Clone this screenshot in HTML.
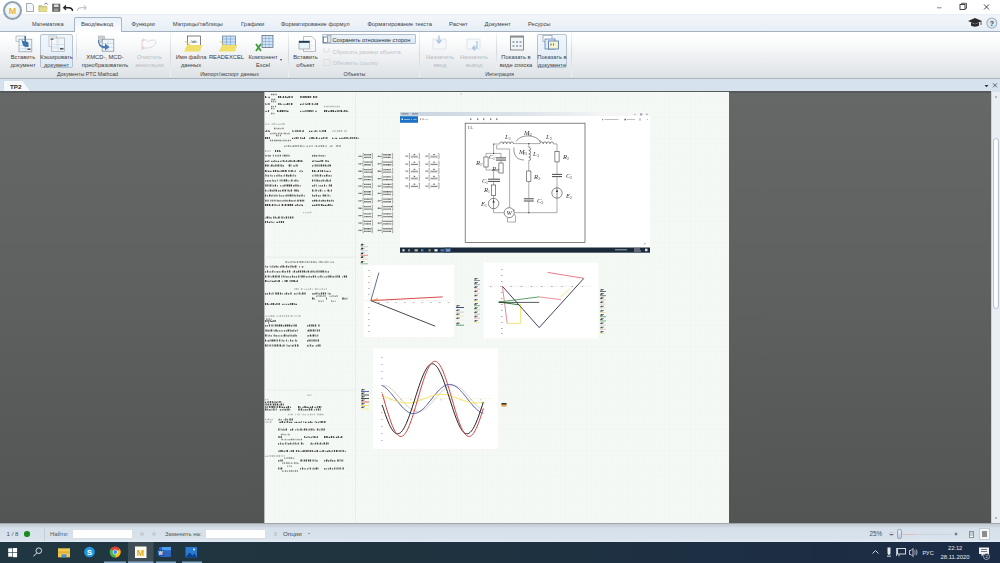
<!DOCTYPE html>
<html><head><meta charset="utf-8">
<style>
*{margin:0;padding:0;box-sizing:border-box}
html,body{width:1000px;height:563px;overflow:hidden;background:#fff;font-family:"Liberation Sans",sans-serif;color:#333}
.a{position:absolute}
.t{position:absolute;white-space:nowrap;font-size:7px;line-height:8px;color:#3c3c3c}
.tab{color:#3f4347}
#titlebar{left:0;top:0;width:1000px;height:14px;background:#fff}
#tabrow{left:0;top:14px;width:1000px;height:17px;background:linear-gradient(#e9eef3 0px,#f2f6fa 2px,#e6eef6 100%)}
#ribbon{left:0;top:31px;width:1000px;height:48px;background:linear-gradient(#ffffff 0%,#fcfdfd 18%,#f1f3f5 45%,#e7eaed 75%,#dde1e5 100%);border-top:1px solid #a4b0bb;border-bottom:1px solid #a9b3bc}
#doctabs{left:0;top:79px;width:1000px;height:13px;background:#d6e2ee}
#work{left:0;top:92px;width:991px;height:431px;background:linear-gradient(#666767 0%,#5f6060 45%,#535555 100%)}
#vscroll{left:991px;top:92px;width:9px;height:431px;background:#e9eef4}
#status{left:0;top:523px;width:1000px;height:19px;background:linear-gradient(#c6ccd2 0px,#c9d1d9 2px,#d6e0ea 4px,#d8e2ec 80%,#e2eaf3 100%);border-top:1px solid #a0a6ac}
#taskbar{left:0;top:542px;width:1000px;height:21px;background:linear-gradient(90deg,#203741 0%,#1f333f 40%,#1b2b45 100%)}
.lbl{font-size:6.5px;line-height:8px;color:#404040;text-align:center;position:absolute;white-space:nowrap}
.dis{color:#b8bcc0}
.sep{position:absolute;width:1px;background:linear-gradient(#f0f2f4,#d3d8dd,#f0f2f4)}
</style></head><body>
<div id="titlebar" class="a"></div>
<div id="tabrow" class="a"></div>
<div id="ribbon" class="a"></div>
<div id="doctabs" class="a"></div>
<div id="work" class="a"></div>
<!--PAGE-->
<svg class="a" style="left:0;top:92px;z-index:1;will-change:transform" width="991" height="431" viewBox="0 92 991 431">
<defs><pattern id="grid" x="264.4" y="92" width="5.2" height="5.2" patternUnits="userSpaceOnUse"><path d="M5.2 0V5.2H0" fill="none" stroke="#e9f0eb" stroke-width="0.3"/></pattern></defs>
<rect x="264.4" y="92" width="464.6" height="431" fill="#f4f9f5"/>
<rect x="264.4" y="92" width="464.6" height="431" fill="url(#grid)"/>
<path d="M355.5 92V523" stroke="#dfe5e1" stroke-width="0.6"/>
<path d="M264.4 257.2H355.5M264.4 390H355.5" stroke="#dfe6e1" stroke-width="0.6"/>
<path d="M265.00 96.10h1.00v1.80h-1.00zM266.50 96.73h0.60v1.17h-0.60zM268.00 96.73h0.60v1.17h-0.60zM269.10 96.73h0.90v1.17h-0.90z" fill="#474747" fill-opacity="1.0"/>
<path d="M278.00 96.10h1.20v1.80h-1.20zM279.70 96.10h1.50v1.80h-1.50zM281.90 96.73h0.60v1.17h-0.60zM283.00 96.10h1.00v1.80h-1.00zM284.90 96.10h1.00v1.80h-1.00zM286.40 96.73h1.50v1.17h-1.50zM288.40 96.10h1.50v1.80h-1.50zM290.80 96.10h0.80v1.80h-0.80zM292.30 96.10h0.70v1.80h-0.70z" fill="#474747" fill-opacity="1.0"/>
<path d="M300.00 96.10h0.80v1.80h-0.80zM301.30 96.10h0.60v1.80h-0.60zM302.60 96.10h1.20v1.80h-1.20zM304.30 96.10h1.50v1.80h-1.50zM306.30 96.10h1.20v1.80h-1.20zM308.00 96.10h1.50v1.80h-1.50zM310.20 96.10h1.00v1.80h-1.00zM313.00 96.10h1.00v1.80h-1.00zM314.50 96.10h1.00v1.80h-1.00zM316.20 96.10h1.00v1.80h-1.00z" fill="#474747" fill-opacity="1.0"/>
<path d="M265.00 103.10h0.60v1.80h-0.60zM266.50 103.73h0.60v1.17h-0.60zM267.80 103.10h0.80v1.80h-0.80zM269.30 103.10h0.60v1.80h-0.60z" fill="#474747" fill-opacity="1.0"/>
<path d="M278.00 103.10h0.80v1.80h-0.80zM279.50 103.10h1.20v1.80h-1.20zM281.40 103.73h0.80v1.17h-0.80zM283.60 103.73h1.00v1.17h-1.00zM285.50 103.73h1.00v1.17h-1.00zM287.00 103.10h1.50v1.80h-1.50zM289.40 103.10h0.60v1.80h-0.60zM290.90 103.10h1.50v1.80h-1.50z" fill="#474747" fill-opacity="1.0"/>
<path d="M300.00 103.73h1.20v1.17h-1.20zM301.70 103.73h0.80v1.17h-0.80zM303.40 103.10h0.60v1.80h-0.60zM304.90 103.10h0.60v1.80h-0.60zM306.00 103.73h0.80v1.17h-0.80zM307.50 103.10h1.00v1.80h-1.00zM309.00 103.10h1.20v1.80h-1.20zM311.80 103.10h1.00v1.80h-1.00zM313.70 103.73h0.80v1.17h-0.80zM315.40 103.10h1.00v1.80h-1.00zM316.90 103.10h1.10v1.80h-1.10z" fill="#474747" fill-opacity="1.0"/>
<path d="M324.00 105.75h1.00v1.50h-1.00zM325.70 105.75h0.80v1.50h-0.80zM327.20 105.75h0.80v1.50h-0.80zM328.50 105.75h0.80v1.50h-0.80zM329.80 105.75h0.80v1.50h-0.80zM331.10 105.75h0.60v1.50h-0.60zM332.20 105.75h1.50v1.50h-1.50zM334.60 105.75h1.00v1.50h-1.00zM336.10 106.28h0.60v0.98h-0.60zM337.20 105.75h1.20v1.50h-1.20zM338.90 106.28h1.10v0.98h-1.10z" fill="#a4a8a5" fill-opacity="1.0"/>
<path d="M265.00 110.73h0.60v1.17h-0.60zM266.30 110.73h0.80v1.17h-0.80zM268.00 110.10h1.00v1.80h-1.00z" fill="#474747" fill-opacity="1.0"/>
<path d="M277.00 110.10h1.20v1.80h-1.20zM278.70 110.73h0.80v1.17h-0.80zM280.00 110.10h1.50v1.80h-1.50zM282.00 110.10h1.50v1.80h-1.50zM284.40 110.10h1.00v1.80h-1.00zM285.90 110.10h0.60v1.80h-0.60zM287.00 110.73h1.50v1.17h-1.50z" fill="#474747" fill-opacity="1.0"/>
<path d="M300.00 110.73h0.80v1.17h-0.80zM301.70 110.73h0.80v1.17h-0.80zM303.40 110.73h1.20v1.17h-1.20zM305.50 110.10h1.00v1.80h-1.00zM307.40 110.10h1.20v1.80h-1.20zM309.10 110.10h1.50v1.80h-1.50zM311.30 110.10h0.80v1.80h-0.80zM312.60 110.10h0.80v1.80h-0.80zM315.30 110.73h0.60v1.17h-0.60zM316.40 110.73h0.60v1.17h-0.60z" fill="#474747" fill-opacity="1.0"/>
<path d="M324.00 110.10h1.50v1.80h-1.50zM326.00 110.10h1.20v1.80h-1.20zM328.10 110.73h1.50v1.17h-1.50zM330.50 110.10h1.50v1.80h-1.50zM332.50 110.10h1.50v1.80h-1.50zM334.70 110.73h1.50v1.17h-1.50zM336.90 110.10h0.80v1.80h-0.80zM338.40 110.10h0.60v1.80h-0.60zM339.50 110.10h1.00v1.80h-1.00zM341.00 110.10h1.00v1.80h-1.00zM342.70 110.73h0.80v1.17h-0.80zM344.20 110.10h0.80v1.80h-0.80zM345.50 110.10h1.20v1.80h-1.20zM347.40 110.73h0.80v1.17h-0.80z" fill="#474747" fill-opacity="1.0"/>
<path d="M265.00 123.25h0.60v1.50h-0.60zM266.50 123.25h0.60v1.50h-0.60zM267.80 123.78h1.50v0.98h-1.50zM271.20 123.78h0.60v0.98h-0.60zM272.30 123.25h1.20v1.50h-1.20zM274.20 123.25h1.20v1.50h-1.20zM276.30 123.78h1.20v0.98h-1.20zM278.00 123.78h0.80v0.98h-0.80zM279.30 123.78h0.60v0.98h-0.60zM280.40 123.78h0.60v0.98h-0.60zM281.50 123.25h1.00v1.50h-1.00zM283.20 123.25h1.50v1.50h-1.50z" fill="#a4a8a5" fill-opacity="1.0"/>
<path d="M265.00 130.73h0.60v1.17h-0.60zM266.10 130.10h0.80v1.80h-0.80zM267.80 130.10h0.80v1.80h-0.80zM269.10 130.73h0.90v1.17h-0.90z" fill="#474747" fill-opacity="1.0"/>
<path d="M292.00 130.10h0.60v1.80h-0.60zM293.50 130.73h0.80v1.17h-0.80zM295.00 130.10h0.60v1.80h-0.60zM296.50 130.10h1.20v1.80h-1.20zM298.60 130.10h1.00v1.80h-1.00zM300.30 130.10h0.80v1.80h-0.80zM302.00 130.73h0.80v1.17h-0.80zM303.30 130.10h0.70v1.80h-0.70z" fill="#474747" fill-opacity="1.0"/>
<path d="M309.00 130.73h1.20v1.17h-1.20zM310.90 130.73h1.50v1.17h-1.50zM313.80 130.73h0.80v1.17h-0.80zM315.30 130.10h1.00v1.80h-1.00zM316.80 130.73h0.60v1.17h-0.60zM319.50 130.10h0.60v1.80h-0.60zM320.60 130.73h0.80v1.17h-0.80zM322.10 130.10h0.60v1.80h-0.60zM323.40 130.10h0.60v1.80h-0.60zM324.50 130.10h1.50v1.80h-1.50z" fill="#474747" fill-opacity="1.0"/>
<path d="M332.00 130.78h1.50v0.98h-1.50zM334.20 130.25h0.80v1.50h-0.80zM335.50 130.25h0.60v1.50h-0.60zM337.00 130.25h1.20v1.50h-1.20zM338.70 130.25h1.50v1.50h-1.50zM340.70 130.25h1.50v1.50h-1.50zM344.00 130.25h0.80v1.50h-0.80zM345.50 130.25h1.20v1.50h-1.20z" fill="#a4a8a5" fill-opacity="1.0"/>
<path d="M265.00 137.10h1.50v1.80h-1.50zM267.00 137.10h1.20v1.80h-1.20zM269.10 137.10h0.90v1.80h-0.90z" fill="#474747" fill-opacity="1.0"/>
<path d="M292.00 137.73h1.20v1.17h-1.20zM293.90 137.73h0.80v1.17h-0.80zM295.60 137.10h1.20v1.80h-1.20zM297.50 137.10h1.00v1.80h-1.00zM300.30 137.10h1.00v1.80h-1.00zM302.00 137.73h1.50v1.17h-1.50zM304.00 137.10h1.00v1.80h-1.00z" fill="#474747" fill-opacity="1.0"/>
<path d="M309.00 137.73h0.80v1.17h-0.80zM310.70 137.10h1.00v1.80h-1.00zM312.20 137.10h1.50v1.80h-1.50zM314.40 137.73h0.60v1.17h-0.60zM315.90 137.10h1.20v1.80h-1.20zM317.60 137.73h0.60v1.17h-0.60zM319.10 137.73h1.00v1.17h-1.00zM321.00 137.73h1.50v1.17h-1.50zM323.20 137.10h0.80v1.80h-0.80zM324.70 137.10h0.60v1.80h-0.60zM326.20 137.10h1.20v1.80h-1.20z" fill="#474747" fill-opacity="1.0"/>
<path d="M332.00 137.73h1.00v1.17h-1.00zM333.70 137.73h0.60v1.17h-0.60zM335.00 137.73h0.60v1.17h-0.60zM336.10 137.73h1.00v1.17h-1.00zM339.20 137.73h1.00v1.17h-1.00zM340.70 137.73h1.00v1.17h-1.00zM342.40 137.73h1.20v1.17h-1.20zM344.30 137.10h1.20v1.80h-1.20zM346.40 137.10h1.20v1.80h-1.20zM348.50 137.73h0.80v1.17h-0.80zM350.20 137.10h1.20v1.80h-1.20zM352.30 137.10h1.00v1.80h-1.00zM354.20 137.10h0.80v1.80h-0.80zM355.70 137.10h1.00v1.80h-1.00zM357.60 137.73h1.00v1.17h-1.00z" fill="#474747" fill-opacity="1.0"/>
<path d="M284.00 145.79h1.50v0.91h-1.50zM286.40 145.30h0.80v1.40h-0.80zM287.90 145.30h1.50v1.40h-1.50zM290.10 145.79h1.20v0.91h-1.20zM291.80 145.79h0.80v0.91h-0.80zM293.10 145.30h1.00v1.40h-1.00zM294.60 145.30h1.20v1.40h-1.20zM296.30 145.30h1.20v1.40h-1.20zM298.20 145.30h1.00v1.40h-1.00zM300.10 145.30h1.50v1.40h-1.50zM302.10 145.79h0.60v0.91h-0.60zM303.40 145.79h1.20v0.91h-1.20zM306.50 145.79h1.50v0.91h-1.50zM308.90 145.79h1.20v0.91h-1.20zM310.60 145.30h0.80v1.40h-0.80zM312.30 145.30h0.60v1.40h-0.60zM314.70 145.79h0.60v0.91h-0.60zM315.80 145.30h1.00v1.40h-1.00zM317.70 145.79h1.20v0.91h-1.20zM319.40 145.30h1.00v1.40h-1.00zM321.10 145.30h1.00v1.40h-1.00zM322.60 145.30h1.50v1.40h-1.50zM324.80 145.79h0.80v0.91h-0.80zM326.10 145.30h0.60v1.40h-0.60zM329.70 145.79h1.20v0.91h-1.20zM331.40 145.30h1.00v1.40h-1.00zM335.90 145.30h0.80v1.40h-0.80zM337.20 145.30h1.20v1.40h-1.20zM339.10 145.30h0.60v1.40h-0.60zM340.20 145.30h0.80v1.40h-0.80z" fill="#7a7a7a" fill-opacity="1.0"/>
<path d="M265.00 150.25h1.50v1.50h-1.50zM267.00 150.78h0.60v0.98h-0.60zM268.10 150.25h0.60v1.50h-0.60zM269.60 150.25h1.00v1.50h-1.00z" fill="#a4a8a5" fill-opacity="1.0"/>
<path d="M275.00 150.10h1.00v1.80h-1.00zM276.90 150.10h1.20v1.80h-1.20zM278.80 150.10h1.00v1.80h-1.00zM280.30 150.73h0.60v1.17h-0.60z" fill="#474747" fill-opacity="1.0"/>
<path d="M265.00 154.70h0.60v1.80h-0.60zM266.30 155.33h1.00v1.17h-1.00zM268.00 154.70h0.60v1.80h-0.60zM269.30 155.33h1.50v1.17h-1.50zM272.90 154.70h0.80v1.80h-0.80zM275.10 154.70h0.60v1.80h-0.60zM276.60 155.33h1.00v1.17h-1.00zM278.50 154.70h0.60v1.80h-0.60zM279.80 154.70h1.00v1.80h-1.00zM282.60 154.70h0.60v1.80h-0.60zM283.90 154.70h1.00v1.80h-1.00zM285.40 154.70h1.20v1.80h-1.20zM287.50 154.70h1.00v1.80h-1.00zM289.40 155.33h0.60v1.17h-0.60z" fill="#474747" fill-opacity="1.0"/>
<path d="M312.00 155.33h1.50v1.17h-1.50zM314.00 154.70h0.80v1.80h-0.80zM315.50 155.33h1.50v1.17h-1.50zM317.70 155.33h0.60v1.17h-0.60zM318.80 154.70h0.80v1.80h-0.80zM320.50 155.33h1.20v1.17h-1.20zM322.40 155.33h1.50v1.17h-1.50zM324.80 155.33h0.60v1.17h-0.60z" fill="#474747" fill-opacity="1.0"/>
<path d="M265.00 160.73h1.50v1.17h-1.50zM267.20 160.73h0.80v1.17h-0.80zM268.50 160.10h0.80v1.80h-0.80zM271.20 160.73h0.80v1.17h-0.80zM272.50 160.73h1.20v1.17h-1.20zM274.40 160.10h0.80v1.80h-0.80zM275.70 160.73h1.00v1.17h-1.00zM277.60 160.73h1.50v1.17h-1.50zM280.00 160.73h0.80v1.17h-0.80zM281.70 160.10h0.60v1.80h-0.60zM283.20 160.10h1.00v1.80h-1.00zM284.70 160.73h0.60v1.17h-0.60zM286.20 160.10h0.80v1.80h-0.80zM287.70 160.73h1.00v1.17h-1.00zM289.20 160.10h0.60v1.80h-0.60zM290.30 160.10h1.20v1.80h-1.20zM292.40 160.73h0.80v1.17h-0.80zM293.70 160.10h1.20v1.80h-1.20zM295.60 160.73h1.00v1.17h-1.00zM297.50 160.10h1.50v1.80h-1.50zM299.50 160.10h1.00v1.80h-1.00zM301.20 160.10h0.80v1.80h-0.80zM302.50 160.73h0.50v1.17h-0.50z" fill="#474747" fill-opacity="1.0"/>
<path d="M312.00 160.73h1.00v1.17h-1.00zM313.50 160.10h0.60v1.80h-0.60zM314.80 160.10h0.60v1.80h-0.60zM316.30 160.73h1.50v1.17h-1.50zM318.30 160.73h1.50v1.17h-1.50zM320.50 160.10h1.20v1.80h-1.20zM322.20 160.10h1.00v1.80h-1.00zM325.30 160.10h0.60v1.80h-0.60zM326.40 160.10h0.80v1.80h-0.80zM327.70 160.73h1.20v1.17h-1.20z" fill="#474747" fill-opacity="1.0"/>
<path d="M265.00 164.60h1.50v1.80h-1.50zM267.00 164.60h0.80v1.80h-0.80zM268.30 164.60h0.60v1.80h-0.60zM269.80 165.23h0.60v1.17h-0.60zM271.10 164.60h1.50v1.80h-1.50zM273.30 165.23h1.20v1.17h-1.20zM275.20 164.60h1.00v1.80h-1.00zM276.70 164.60h0.60v1.80h-0.60zM277.80 164.60h1.20v1.80h-1.20zM279.70 164.60h0.80v1.80h-0.80zM281.00 164.60h0.80v1.80h-0.80zM282.50 165.23h1.50v1.17h-1.50zM288.60 164.60h1.50v1.80h-1.50zM290.60 164.60h0.80v1.80h-0.80zM293.30 165.23h1.50v1.17h-1.50zM295.70 164.60h1.00v1.80h-1.00zM297.40 164.60h0.60v1.80h-0.60z" fill="#474747" fill-opacity="1.0"/>
<path d="M312.00 165.23h1.00v1.17h-1.00zM313.70 164.60h0.60v1.80h-0.60zM315.20 164.60h1.00v1.80h-1.00zM316.70 164.60h1.00v1.80h-1.00zM318.60 164.60h1.00v1.80h-1.00zM320.50 164.60h1.50v1.80h-1.50zM322.70 164.60h1.50v1.80h-1.50zM324.90 164.60h1.00v1.80h-1.00zM326.40 165.23h1.00v1.17h-1.00zM327.90 164.60h0.80v1.80h-0.80zM329.40 164.60h1.50v1.80h-1.50z" fill="#474747" fill-opacity="1.0"/>
<path d="M265.00 170.10h1.00v1.80h-1.00zM266.50 170.10h0.80v1.80h-0.80zM268.00 170.73h1.50v1.17h-1.50zM270.20 170.73h0.80v1.17h-0.80zM271.50 170.73h0.60v1.17h-0.60zM273.00 170.10h1.00v1.80h-1.00zM274.70 170.10h1.50v1.80h-1.50zM276.90 170.10h0.80v1.80h-0.80zM278.20 170.73h0.80v1.17h-0.80zM279.50 170.73h1.00v1.17h-1.00zM281.00 170.10h0.60v1.80h-0.60zM282.30 170.10h1.50v1.80h-1.50zM284.70 170.10h1.20v1.80h-1.20zM286.40 170.10h0.60v1.80h-0.60zM288.40 170.10h0.60v1.80h-0.60zM289.50 170.10h0.80v1.80h-0.80zM291.20 170.10h1.50v1.80h-1.50zM293.60 170.73h0.80v1.17h-0.80zM295.30 170.10h0.60v1.80h-0.60zM299.40 170.73h0.80v1.17h-0.80zM300.70 170.10h0.60v1.80h-0.60zM302.20 170.73h0.80v1.17h-0.80z" fill="#474747" fill-opacity="1.0"/>
<path d="M312.00 170.10h1.20v1.80h-1.20zM313.90 170.10h1.00v1.80h-1.00zM315.40 170.73h0.60v1.17h-0.60zM316.70 170.73h0.80v1.17h-0.80zM318.00 170.10h1.00v1.80h-1.00zM319.90 170.10h0.80v1.80h-0.80zM321.60 170.10h1.50v1.80h-1.50zM324.00 170.10h0.60v1.80h-0.60zM325.50 170.73h0.80v1.17h-0.80zM326.80 170.73h1.20v1.17h-1.20zM328.50 170.73h0.80v1.17h-0.80zM330.20 170.73h0.80v1.17h-0.80z" fill="#474747" fill-opacity="1.0"/>
<path d="M265.00 174.60h0.60v1.80h-0.60zM266.50 174.60h0.60v1.80h-0.60zM267.60 175.23h1.50v1.17h-1.50zM270.00 174.60h0.60v1.80h-0.60zM271.50 175.23h1.20v1.17h-1.20zM274.10 175.23h1.00v1.17h-1.00zM276.00 175.23h0.80v1.17h-0.80zM277.50 174.60h0.60v1.80h-0.60zM278.60 174.60h1.00v1.80h-1.00zM280.50 175.23h1.50v1.17h-1.50zM282.90 175.23h0.60v1.17h-0.60zM284.40 174.60h0.60v1.80h-0.60zM285.90 174.60h1.50v1.80h-1.50zM287.90 175.23h1.50v1.17h-1.50zM289.90 174.60h1.50v1.80h-1.50zM291.90 175.23h0.60v1.17h-0.60zM293.40 174.60h0.80v1.80h-0.80zM295.10 175.23h1.00v1.17h-1.00z" fill="#474747" fill-opacity="1.0"/>
<path d="M312.00 175.23h0.80v1.17h-0.80zM313.70 174.60h0.60v1.80h-0.60zM315.20 174.60h0.60v1.80h-0.60zM316.50 174.60h1.20v1.80h-1.20zM318.40 175.23h0.60v1.17h-0.60zM319.70 174.60h1.50v1.80h-1.50zM322.10 175.23h0.80v1.17h-0.80zM323.80 175.23h1.50v1.17h-1.50zM326.00 174.60h1.50v1.80h-1.50zM328.40 175.23h1.50v1.17h-1.50zM330.60 175.23h1.00v1.17h-1.00z" fill="#474747" fill-opacity="1.0"/>
<path d="M265.00 180.23h0.80v1.17h-0.80zM266.70 180.23h1.50v1.17h-1.50zM268.70 180.23h1.00v1.17h-1.00zM270.20 180.23h1.00v1.17h-1.00zM272.10 179.60h0.60v1.80h-0.60zM273.20 180.23h1.20v1.17h-1.20zM275.10 180.23h1.00v1.17h-1.00zM277.00 179.60h0.60v1.80h-0.60zM279.70 179.60h0.80v1.80h-0.80zM281.20 179.60h0.60v1.80h-0.60zM282.50 179.60h0.60v1.80h-0.60zM283.80 179.60h1.50v1.80h-1.50zM285.80 179.60h1.50v1.80h-1.50zM288.20 180.23h0.60v1.17h-0.60zM289.70 180.23h0.60v1.17h-0.60zM291.00 179.60h0.80v1.80h-0.80zM292.50 179.60h0.60v1.80h-0.60zM294.00 180.23h0.80v1.17h-0.80zM295.30 179.60h1.20v1.80h-1.20zM297.00 180.23h0.60v1.17h-0.60zM298.50 180.23h0.50v1.17h-0.50z" fill="#474747" fill-opacity="1.0"/>
<path d="M312.00 179.60h1.20v1.80h-1.20zM314.10 179.60h0.60v1.80h-0.60zM315.60 179.60h1.00v1.80h-1.00zM317.10 179.60h0.80v1.80h-0.80zM318.40 180.23h1.50v1.17h-1.50zM320.60 180.23h1.20v1.17h-1.20zM322.50 179.60h1.20v1.80h-1.20zM324.60 180.23h1.00v1.17h-1.00zM326.30 179.60h1.50v1.80h-1.50zM328.50 180.23h1.20v1.17h-1.20zM330.20 179.60h0.80v1.80h-0.80z" fill="#474747" fill-opacity="1.0"/>
<path d="M265.00 184.60h0.80v1.80h-0.80zM266.50 184.60h1.20v1.80h-1.20zM268.60 184.60h0.80v1.80h-0.80zM269.90 184.60h1.00v1.80h-1.00zM271.60 184.60h0.80v1.80h-0.80zM273.10 185.23h1.00v1.17h-1.00zM274.80 184.60h1.20v1.80h-1.20zM276.90 185.23h1.00v1.17h-1.00zM280.00 185.23h0.80v1.17h-0.80zM281.70 185.23h0.60v1.17h-0.60zM282.80 185.23h1.00v1.17h-1.00zM284.30 184.60h0.80v1.80h-0.80zM285.60 184.60h0.80v1.80h-0.80zM286.90 184.60h1.50v1.80h-1.50zM288.90 184.60h1.50v1.80h-1.50zM290.90 184.60h1.20v1.80h-1.20zM293.00 185.23h1.20v1.17h-1.20zM294.70 184.60h1.00v1.80h-1.00zM296.40 184.60h1.20v1.80h-1.20zM298.10 185.23h1.20v1.17h-1.20zM300.20 185.23h0.60v1.17h-0.60z" fill="#474747" fill-opacity="1.0"/>
<path d="M312.00 185.23h1.50v1.17h-1.50zM314.20 184.60h1.00v1.80h-1.00zM316.10 184.60h0.60v1.80h-0.60zM318.50 185.23h1.00v1.17h-1.00zM320.20 185.23h1.20v1.17h-1.20zM321.90 185.23h1.20v1.17h-1.20zM324.00 184.60h1.00v1.80h-1.00zM325.90 185.23h0.80v1.17h-0.80zM328.80 184.60h1.00v1.80h-1.00zM330.50 184.60h1.50v1.80h-1.50z" fill="#474747" fill-opacity="1.0"/>
<path d="M265.00 189.60h0.80v1.80h-0.80zM266.50 190.23h0.80v1.17h-0.80zM268.20 190.23h0.60v1.17h-0.60zM269.70 189.60h1.50v1.80h-1.50zM271.70 190.23h1.20v1.17h-1.20zM273.40 189.60h1.20v1.80h-1.20zM275.50 189.60h1.50v1.80h-1.50zM277.90 190.23h1.50v1.17h-1.50zM279.90 190.23h1.20v1.17h-1.20zM282.00 189.60h0.80v1.80h-0.80zM283.30 189.60h0.60v1.80h-0.60zM284.60 189.60h1.50v1.80h-1.50zM287.50 189.60h1.20v1.80h-1.20zM289.20 190.23h1.20v1.17h-1.20zM290.90 189.60h1.20v1.80h-1.20zM294.20 189.60h1.50v1.80h-1.50zM296.20 189.60h1.20v1.80h-1.20zM297.90 190.23h1.10v1.17h-1.10z" fill="#474747" fill-opacity="1.0"/>
<path d="M312.00 189.60h1.20v1.80h-1.20zM313.70 190.23h0.60v1.17h-0.60zM315.00 189.60h0.60v1.80h-0.60zM316.30 189.60h0.80v1.80h-0.80zM318.00 190.23h0.80v1.17h-0.80zM319.70 189.60h1.50v1.80h-1.50zM321.90 190.23h0.60v1.17h-0.60zM324.40 190.23h1.00v1.17h-1.00zM327.50 189.60h1.50v1.80h-1.50zM329.50 190.23h0.80v1.17h-0.80zM331.20 189.60h0.80v1.80h-0.80z" fill="#474747" fill-opacity="1.0"/>
<path d="M265.00 194.60h1.20v1.80h-1.20zM267.10 195.23h1.00v1.17h-1.00zM269.00 194.60h1.50v1.80h-1.50zM271.00 195.23h0.80v1.17h-0.80zM272.50 194.60h0.80v1.80h-0.80zM274.20 195.23h0.80v1.17h-0.80zM275.50 194.60h1.00v1.80h-1.00zM277.40 195.23h0.60v1.17h-0.60zM278.90 194.60h0.80v1.80h-0.80zM280.60 195.23h1.20v1.17h-1.20zM282.70 195.23h1.20v1.17h-1.20zM284.80 195.23h0.80v1.17h-0.80zM286.30 194.60h1.20v1.80h-1.20zM288.40 194.60h0.60v1.80h-0.60zM289.50 194.60h1.50v1.80h-1.50zM291.50 194.60h1.20v1.80h-1.20zM293.60 194.60h1.00v1.80h-1.00zM295.10 195.23h0.80v1.17h-0.80zM296.80 194.60h1.00v1.80h-1.00zM298.50 195.23h1.50v1.17h-1.50zM300.70 194.60h1.00v1.80h-1.00zM302.40 194.60h0.60v1.80h-0.60zM303.70 195.23h1.00v1.17h-1.00z" fill="#474747" fill-opacity="1.0"/>
<path d="M312.00 194.60h0.80v1.80h-0.80zM313.50 195.23h1.50v1.17h-1.50zM315.70 194.60h1.20v1.80h-1.20zM317.80 195.23h1.50v1.17h-1.50zM319.80 195.23h1.00v1.17h-1.00zM322.70 194.60h1.20v1.80h-1.20zM324.40 194.60h1.50v1.80h-1.50zM326.80 194.60h0.60v1.80h-0.60zM328.30 194.60h0.60v1.80h-0.60zM329.60 195.23h0.80v1.17h-0.80z" fill="#474747" fill-opacity="1.0"/>
<path d="M265.00 199.70h0.80v1.80h-0.80zM266.50 199.70h0.60v1.80h-0.60zM267.60 199.70h1.00v1.80h-1.00zM270.40 199.70h1.00v1.80h-1.00zM272.30 199.70h1.00v1.80h-1.00zM274.20 199.70h0.60v1.80h-0.60zM275.50 199.70h0.60v1.80h-0.60zM276.80 199.70h0.80v1.80h-0.80zM278.10 200.33h1.20v1.17h-1.20zM279.80 200.33h0.80v1.17h-0.80zM281.50 200.33h1.00v1.17h-1.00zM283.20 199.70h0.60v1.80h-0.60zM284.30 200.33h0.60v1.17h-0.60zM285.40 199.70h1.20v1.80h-1.20zM287.30 200.33h0.80v1.17h-0.80zM288.80 199.70h1.50v1.80h-1.50zM290.80 200.33h1.00v1.17h-1.00zM292.30 200.33h1.00v1.17h-1.00zM293.80 200.33h1.00v1.17h-1.00zM295.50 199.70h0.60v1.80h-0.60zM297.00 199.70h0.80v1.80h-0.80zM298.30 199.70h1.00v1.80h-1.00zM300.00 199.70h1.00v1.80h-1.00zM301.50 199.70h1.20v1.80h-1.20zM303.20 199.70h1.00v1.80h-1.00z" fill="#474747" fill-opacity="1.0"/>
<path d="M312.00 200.33h1.50v1.17h-1.50zM314.00 199.70h1.50v1.80h-1.50zM316.00 199.70h1.20v1.80h-1.20zM317.70 200.33h0.80v1.17h-0.80zM319.00 199.70h0.80v1.80h-0.80zM320.70 200.33h1.20v1.17h-1.20zM322.40 199.70h1.50v1.80h-1.50zM324.40 200.33h1.50v1.17h-1.50zM326.80 199.70h1.50v1.80h-1.50zM328.80 200.33h1.50v1.17h-1.50zM331.20 199.70h1.20v1.80h-1.20zM333.10 200.33h0.80v1.17h-0.80z" fill="#474747" fill-opacity="1.0"/>
<path d="M265.00 204.10h1.50v1.80h-1.50zM267.00 204.10h1.00v1.80h-1.00zM268.70 204.10h1.50v1.80h-1.50zM270.70 204.73h0.60v1.17h-0.60zM272.00 204.10h1.20v1.80h-1.20zM273.90 204.10h0.60v1.80h-0.60zM275.40 204.10h0.60v1.80h-0.60zM276.50 204.73h0.80v1.17h-0.80zM277.80 204.73h0.80v1.17h-0.80zM279.10 204.10h0.60v1.80h-0.60zM281.60 204.10h1.50v1.80h-1.50zM283.80 204.73h0.60v1.17h-0.60zM284.90 204.10h1.20v1.80h-1.20zM286.80 204.10h0.60v1.80h-0.60zM287.90 204.10h1.50v1.80h-1.50zM289.90 204.10h1.50v1.80h-1.50zM291.90 204.10h1.20v1.80h-1.20zM294.90 204.73h1.00v1.17h-1.00zM296.60 204.10h1.20v1.80h-1.20zM298.50 204.73h1.20v1.17h-1.20zM300.60 204.10h0.80v1.80h-0.80zM301.90 204.73h1.20v1.17h-1.20z" fill="#474747" fill-opacity="1.0"/>
<path d="M312.00 204.73h1.50v1.17h-1.50zM314.00 204.73h1.50v1.17h-1.50zM316.20 204.10h1.20v1.80h-1.20zM318.30 204.10h0.60v1.80h-0.60zM319.40 204.10h0.60v1.80h-0.60zM320.90 204.10h1.50v1.80h-1.50zM322.90 204.73h1.50v1.17h-1.50zM324.90 204.73h1.20v1.17h-1.20zM326.60 204.73h1.00v1.17h-1.00zM328.10 204.10h1.50v1.80h-1.50zM330.30 204.10h0.60v1.80h-0.60zM331.40 204.73h1.20v1.17h-1.20z" fill="#474747" fill-opacity="1.0"/>
<path d="M303.00 212.28h1.20v0.98h-1.20zM305.10 212.28h0.60v0.98h-0.60zM306.40 212.28h1.50v0.98h-1.50zM308.60 211.75h0.80v1.50h-0.80zM310.30 211.75h1.00v1.50h-1.00z" fill="#a4a8a5" fill-opacity="1.0"/>
<path d="M265.00 217.23h0.60v1.17h-0.60zM266.50 216.60h1.50v1.80h-1.50zM268.50 216.60h1.00v1.80h-1.00zM270.20 217.23h1.50v1.17h-1.50zM273.10 216.60h0.80v1.80h-0.80zM274.60 216.60h1.20v1.80h-1.20zM276.50 217.23h1.00v1.17h-1.00zM278.00 216.60h0.80v1.80h-0.80zM279.30 216.60h0.80v1.80h-0.80zM281.00 216.60h0.60v1.80h-0.60zM282.30 216.60h1.00v1.80h-1.00zM284.20 217.23h0.80v1.17h-0.80zM285.70 216.60h1.50v1.80h-1.50zM288.10 216.60h0.80v1.80h-0.80zM289.80 216.60h1.50v1.80h-1.50zM292.20 216.60h1.20v1.80h-1.20z" fill="#474747" fill-opacity="1.0"/>
<path d="M265.00 221.10h1.20v1.80h-1.20zM267.10 221.10h1.00v1.80h-1.00zM268.80 221.73h1.20v1.17h-1.20zM270.70 221.10h0.80v1.80h-0.80zM272.00 221.73h0.60v1.17h-0.60zM273.50 221.73h0.80v1.17h-0.80zM276.40 221.73h1.50v1.17h-1.50zM278.80 221.10h1.00v1.80h-1.00zM280.70 221.10h1.50v1.80h-1.50zM282.90 221.10h1.00v1.80h-1.00z" fill="#474747" fill-opacity="1.0"/>
<path d="M285.00 261.30h0.60v1.40h-0.60zM286.10 261.30h1.20v1.40h-1.20zM288.20 261.79h1.50v0.91h-1.50zM290.40 261.30h1.20v1.40h-1.20zM292.50 261.30h1.00v1.40h-1.00zM294.00 261.30h0.80v1.40h-0.80zM295.30 261.79h1.00v0.91h-1.00zM297.00 261.30h1.00v1.40h-1.00zM298.70 261.30h0.80v1.40h-0.80zM300.00 261.30h1.50v1.40h-1.50zM302.00 261.30h1.50v1.40h-1.50zM304.40 261.79h0.60v0.91h-0.60zM305.50 261.30h1.00v1.40h-1.00zM307.20 261.30h1.20v1.40h-1.20zM309.30 261.30h0.60v1.40h-0.60zM310.80 261.30h1.50v1.40h-1.50zM313.20 261.30h1.50v1.40h-1.50zM315.40 261.79h1.50v0.91h-1.50zM318.70 261.30h0.80v1.40h-0.80zM320.20 261.30h1.50v1.40h-1.50zM322.60 261.30h0.60v1.40h-0.60zM323.70 261.79h0.80v0.91h-0.80zM325.20 261.30h0.60v1.40h-0.60zM326.30 261.30h1.00v1.40h-1.00zM327.80 261.30h0.60v1.40h-0.60zM329.80 261.79h0.80v0.91h-0.80zM331.50 261.30h0.80v1.40h-0.80zM333.00 261.79h1.00v0.91h-1.00z" fill="#7a7a7a" fill-opacity="1.0"/>
<path d="M265.00 265.60h0.60v1.80h-0.60zM266.50 266.23h1.50v1.17h-1.50zM269.80 265.60h0.60v1.80h-0.60zM270.90 266.23h0.60v1.17h-0.60zM272.40 265.60h1.00v1.80h-1.00zM274.10 266.23h1.00v1.17h-1.00zM275.60 265.60h1.20v1.80h-1.20zM277.30 266.23h1.20v1.17h-1.20zM279.90 266.23h1.00v1.17h-1.00zM281.40 265.60h0.60v1.80h-0.60zM282.50 265.60h1.50v1.80h-1.50zM284.50 266.23h0.80v1.17h-0.80zM286.00 265.60h1.20v1.80h-1.20zM287.90 266.23h1.20v1.17h-1.20zM289.80 265.60h0.80v1.80h-0.80zM291.50 265.60h1.20v1.80h-1.20zM293.20 266.23h1.20v1.17h-1.20zM294.90 265.60h1.50v1.80h-1.50zM299.10 266.23h0.80v1.17h-0.80zM301.80 266.23h1.50v1.17h-1.50z" fill="#474747" fill-opacity="1.0"/>
<path d="M265.00 271.23h1.00v1.17h-1.00zM266.90 270.60h1.20v1.80h-1.20zM268.80 271.23h0.80v1.17h-0.80zM270.30 271.23h1.00v1.17h-1.00zM272.20 270.60h1.20v1.80h-1.20zM274.10 271.23h0.60v1.17h-0.60zM275.60 271.23h0.80v1.17h-0.80zM276.90 271.23h1.50v1.17h-1.50zM279.10 271.23h0.80v1.17h-0.80zM280.60 271.23h0.80v1.17h-0.80zM282.10 270.60h1.50v1.80h-1.50zM284.50 271.23h1.50v1.17h-1.50zM286.90 270.60h1.00v1.80h-1.00zM288.80 270.60h1.50v1.80h-1.50zM292.60 271.23h0.80v1.17h-0.80zM293.90 270.60h1.20v1.80h-1.20zM296.00 271.23h1.50v1.17h-1.50zM298.00 270.60h1.00v1.80h-1.00zM299.70 270.60h1.50v1.80h-1.50zM302.10 270.60h1.20v1.80h-1.20zM303.80 270.60h1.20v1.80h-1.20zM305.50 271.23h1.20v1.17h-1.20zM307.60 270.60h1.50v1.80h-1.50zM310.00 271.23h0.80v1.17h-0.80zM311.30 270.60h0.80v1.80h-0.80zM312.60 270.60h1.00v1.80h-1.00zM314.30 271.23h1.20v1.17h-1.20zM316.40 270.60h1.20v1.80h-1.20zM318.50 270.60h1.00v1.80h-1.00zM320.40 270.60h1.50v1.80h-1.50zM322.40 270.60h1.50v1.80h-1.50zM324.80 270.60h0.80v1.80h-0.80zM326.30 271.23h0.80v1.17h-0.80zM327.80 271.23h1.20v1.17h-1.20z" fill="#474747" fill-opacity="1.0"/>
<path d="M265.00 275.60h1.00v1.80h-1.00zM266.70 275.60h0.60v1.80h-0.60zM268.20 275.60h1.00v1.80h-1.00zM269.70 275.60h0.60v1.80h-0.60zM271.00 276.23h0.60v1.17h-0.60zM272.50 275.60h1.50v1.80h-1.50zM274.70 275.60h1.20v1.80h-1.20zM276.40 275.60h1.00v1.80h-1.00zM278.30 275.60h1.50v1.80h-1.50zM281.40 275.60h0.60v1.80h-0.60zM282.70 275.60h1.00v1.80h-1.00zM284.60 275.60h0.80v1.80h-0.80zM286.10 276.23h1.50v1.17h-1.50zM288.30 276.23h1.00v1.17h-1.00zM290.00 276.23h1.00v1.17h-1.00zM291.90 275.60h1.20v1.80h-1.20zM293.80 276.23h1.20v1.17h-1.20zM295.70 276.23h1.50v1.17h-1.50zM298.10 275.60h0.80v1.80h-0.80zM299.60 275.60h0.60v1.80h-0.60zM300.90 275.60h0.80v1.80h-0.80zM302.20 275.60h1.50v1.80h-1.50zM304.40 275.60h0.80v1.80h-0.80zM306.10 276.23h1.20v1.17h-1.20zM307.80 276.23h0.80v1.17h-0.80zM309.30 275.60h0.60v1.80h-0.60zM310.60 276.23h1.50v1.17h-1.50zM312.80 275.60h1.50v1.80h-1.50zM315.20 275.60h0.80v1.80h-0.80zM316.90 276.23h0.60v1.17h-0.60zM318.40 276.23h1.00v1.17h-1.00zM320.30 275.60h1.20v1.80h-1.20zM322.40 276.23h0.80v1.17h-0.80zM324.10 276.23h0.60v1.17h-0.60zM325.60 276.23h1.20v1.17h-1.20zM327.70 275.60h1.00v1.80h-1.00zM329.40 275.60h1.50v1.80h-1.50zM331.60 275.60h0.60v1.80h-0.60zM332.70 276.23h1.50v1.17h-1.50zM334.90 275.60h0.60v1.80h-0.60zM336.40 275.60h1.20v1.80h-1.20zM338.50 275.60h1.50v1.80h-1.50zM342.30 276.23h0.60v1.17h-0.60zM343.80 275.60h1.50v1.80h-1.50zM345.80 275.60h1.20v1.80h-1.20z" fill="#474747" fill-opacity="1.0"/>
<path d="M265.00 280.10h1.50v1.80h-1.50zM267.40 280.73h1.20v1.17h-1.20zM269.50 280.73h0.60v1.17h-0.60zM270.60 280.10h0.60v1.80h-0.60zM271.90 280.73h1.00v1.17h-1.00zM273.40 280.73h1.50v1.17h-1.50zM275.40 280.10h1.00v1.80h-1.00zM277.10 280.73h0.60v1.17h-0.60zM278.40 280.10h1.50v1.80h-1.50zM282.20 280.73h0.60v1.17h-0.60zM284.60 280.10h1.00v1.80h-1.00zM286.10 280.10h1.50v1.80h-1.50zM289.70 280.10h0.80v1.80h-0.80zM291.40 280.10h1.20v1.80h-1.20zM293.30 280.10h1.50v1.80h-1.50zM295.50 280.73h1.20v1.17h-1.20zM297.20 280.10h0.80v1.80h-0.80z" fill="#474747" fill-opacity="1.0"/>
<path d="M294.00 288.25h0.60v1.50h-0.60zM295.50 288.25h1.50v1.50h-1.50zM297.50 288.25h1.20v1.50h-1.20zM301.00 288.25h1.50v1.50h-1.50zM304.30 288.77h1.00v0.98h-1.00zM306.00 288.77h1.20v0.98h-1.20zM307.90 288.77h1.50v0.98h-1.50zM309.90 288.25h1.20v1.50h-1.20zM312.00 288.77h0.80v0.98h-0.80zM314.90 288.25h1.00v1.50h-1.00zM316.40 288.25h0.60v1.50h-0.60zM317.50 288.25h0.80v1.50h-0.80zM319.20 288.77h0.60v0.98h-0.60zM320.30 288.77h0.80v0.98h-0.80zM321.80 288.25h1.00v1.50h-1.00zM323.50 288.77h1.50v0.98h-1.50zM325.90 288.25h1.00v1.50h-1.00z" fill="#a4a8a5" fill-opacity="1.0"/>
<path d="M265.00 293.23h1.50v1.17h-1.50zM267.00 293.23h1.00v1.17h-1.00zM268.90 292.60h1.20v1.80h-1.20zM270.80 293.23h0.80v1.17h-0.80zM272.50 292.60h1.00v1.80h-1.00zM275.30 292.60h1.50v1.80h-1.50zM277.50 292.60h1.50v1.80h-1.50zM279.90 292.60h1.20v1.80h-1.20zM281.80 293.23h1.00v1.17h-1.00zM284.40 293.23h1.00v1.17h-1.00zM285.90 292.60h1.20v1.80h-1.20zM287.80 293.23h1.50v1.17h-1.50zM290.20 292.60h0.60v1.80h-0.60zM291.30 292.60h0.60v1.80h-0.60zM294.00 293.23h1.50v1.17h-1.50zM296.20 293.23h0.60v1.17h-0.60zM297.70 292.60h0.60v1.80h-0.60zM299.20 292.60h1.00v1.80h-1.00zM300.70 293.23h0.60v1.17h-0.60zM302.00 292.60h1.50v1.80h-1.50zM304.00 292.60h0.60v1.80h-0.60zM305.30 292.60h0.60v1.80h-0.60z" fill="#474747" fill-opacity="1.0"/>
<path d="M312.00 293.23h0.80v1.17h-0.80zM313.30 293.23h1.50v1.17h-1.50zM315.50 292.60h1.20v1.80h-1.20zM317.60 292.60h0.80v1.80h-0.80zM319.10 293.23h0.80v1.17h-0.80zM320.80 292.60h1.20v1.80h-1.20zM322.70 292.60h1.50v1.80h-1.50zM324.90 292.60h1.00v1.80h-1.00zM327.80 292.60h0.60v1.80h-0.60zM329.10 293.23h0.80v1.17h-0.80zM330.40 293.23h0.60v1.17h-0.60z" fill="#474747" fill-opacity="1.0"/>
<path d="M312.00 297.60h1.50v1.80h-1.50zM314.20 298.23h0.80v1.17h-0.80z" fill="#474747" fill-opacity="1.0"/>
<path d="M326.00 297.60h0.80v1.80h-0.80z" fill="#474747" fill-opacity="1.0"/>
<path d="M342.00 297.60h0.80v1.80h-0.80zM343.30 297.60h1.00v1.80h-1.00zM344.80 298.23h1.00v1.17h-1.00zM346.70 297.60h0.60v1.80h-0.60z" fill="#474747" fill-opacity="1.0"/>
<path d="M265.00 303.10h1.00v1.80h-1.00zM266.70 303.10h1.20v1.80h-1.20zM268.40 303.73h0.60v1.17h-0.60zM269.70 303.73h0.80v1.17h-0.80zM271.20 303.10h1.00v1.80h-1.00zM272.70 303.10h1.50v1.80h-1.50zM274.90 303.73h0.80v1.17h-0.80zM276.40 303.10h0.60v1.80h-0.60zM277.50 303.10h1.00v1.80h-1.00zM279.20 303.10h0.80v1.80h-0.80zM281.90 303.73h0.80v1.17h-0.80zM283.40 303.73h0.60v1.17h-0.60zM284.50 303.73h0.80v1.17h-0.80zM286.20 303.73h1.00v1.17h-1.00zM288.10 303.73h1.20v1.17h-1.20zM290.20 303.10h1.20v1.80h-1.20zM291.90 303.10h1.50v1.80h-1.50zM294.30 303.10h0.60v1.80h-0.60zM295.40 303.73h1.50v1.17h-1.50z" fill="#474747" fill-opacity="1.0"/>
<path d="M265.00 315.77h0.60v0.98h-0.60zM266.10 315.25h0.60v1.50h-0.60zM267.60 315.77h1.20v0.98h-1.20zM269.70 315.25h0.80v1.50h-0.80zM271.00 315.25h1.50v1.50h-1.50zM273.00 315.25h1.00v1.50h-1.00zM274.50 315.77h0.60v0.98h-0.60zM276.70 315.25h0.80v1.50h-0.80zM278.40 315.77h1.00v0.98h-1.00zM279.90 315.25h1.20v1.50h-1.20zM282.00 315.25h1.20v1.50h-1.20zM284.10 315.77h1.00v0.98h-1.00zM285.80 315.25h1.20v1.50h-1.20zM287.70 315.25h1.20v1.50h-1.20zM289.80 315.25h0.60v1.50h-0.60zM291.10 315.25h1.50v1.50h-1.50zM294.00 315.25h0.60v1.50h-0.60zM295.50 315.77h1.20v0.98h-1.20zM297.60 315.25h0.60v1.50h-0.60zM298.90 315.25h1.50v1.50h-1.50z" fill="#a4a8a5" fill-opacity="1.0"/>
<path d="M265.00 320.10h0.80v1.80h-0.80zM266.50 320.10h1.00v1.80h-1.00zM268.40 320.10h1.00v1.80h-1.00zM270.10 320.10h0.60v1.80h-0.60zM271.20 320.73h1.50v1.17h-1.50zM273.40 320.10h1.00v1.80h-1.00zM274.90 320.10h0.80v1.80h-0.80z" fill="#474747" fill-opacity="1.0"/>
<path d="M265.00 325.23h1.50v1.17h-1.50zM267.20 325.23h0.80v1.17h-0.80zM268.90 324.60h1.20v1.80h-1.20zM271.00 324.60h0.60v1.80h-0.60zM272.30 324.60h0.60v1.80h-0.60zM273.60 324.60h0.60v1.80h-0.60zM275.10 324.60h1.50v1.80h-1.50zM277.30 324.60h1.20v1.80h-1.20zM279.00 324.60h1.20v1.80h-1.20zM280.70 324.60h1.50v1.80h-1.50zM282.90 325.23h1.20v1.17h-1.20zM284.80 324.60h1.50v1.80h-1.50zM286.80 324.60h1.50v1.80h-1.50zM288.80 324.60h1.50v1.80h-1.50zM291.00 325.23h1.00v1.17h-1.00zM292.70 324.60h0.60v1.80h-0.60zM293.80 324.60h0.80v1.80h-0.80zM295.30 324.60h1.50v1.80h-1.50z" fill="#474747" fill-opacity="1.0"/>
<path d="M307.00 325.23h1.20v1.17h-1.20zM308.90 324.60h1.20v1.80h-1.20zM310.80 324.60h1.00v1.80h-1.00zM312.30 324.60h1.50v1.80h-1.50zM314.70 324.60h1.50v1.80h-1.50zM318.30 324.60h1.20v1.80h-1.20z" fill="#474747" fill-opacity="1.0"/>
<path d="M265.00 329.60h0.60v1.80h-0.60zM266.30 329.60h1.20v1.80h-1.20zM268.00 330.23h1.20v1.17h-1.20zM269.70 329.60h0.80v1.80h-0.80zM271.00 329.60h1.00v1.80h-1.00zM272.70 329.60h0.60v1.80h-0.60zM274.20 330.23h0.60v1.17h-0.60zM275.30 329.60h1.50v1.80h-1.50zM277.30 330.23h1.00v1.17h-1.00zM279.20 330.23h1.20v1.17h-1.20zM281.10 330.23h0.60v1.17h-0.60zM282.40 330.23h0.80v1.17h-0.80zM284.10 330.23h1.00v1.17h-1.00zM285.80 330.23h1.00v1.17h-1.00zM287.50 329.60h1.50v1.80h-1.50zM289.70 329.60h1.00v1.80h-1.00zM291.40 330.23h1.50v1.17h-1.50zM293.40 329.60h0.80v1.80h-0.80zM294.90 330.23h1.20v1.17h-1.20zM296.80 329.60h0.80v1.80h-0.80z" fill="#474747" fill-opacity="1.0"/>
<path d="M307.00 330.23h0.60v1.17h-0.60zM308.10 329.60h1.20v1.80h-1.20zM309.80 329.60h1.00v1.80h-1.00zM311.30 329.60h0.80v1.80h-0.80zM312.80 329.60h1.20v1.80h-1.20zM314.50 329.60h0.60v1.80h-0.60zM315.60 329.60h0.60v1.80h-0.60zM317.10 329.60h1.20v1.80h-1.20zM319.20 329.60h0.80v1.80h-0.80z" fill="#474747" fill-opacity="1.0"/>
<path d="M265.00 334.60h1.00v1.80h-1.00zM266.50 334.60h0.80v1.80h-0.80zM268.20 335.23h0.60v1.17h-0.60zM269.30 334.60h0.60v1.80h-0.60zM270.60 335.23h1.20v1.17h-1.20zM273.70 334.60h1.00v1.80h-1.00zM275.40 335.23h1.50v1.17h-1.50zM277.60 335.23h1.00v1.17h-1.00zM279.50 335.23h0.80v1.17h-0.80zM281.00 335.23h0.80v1.17h-0.80zM282.70 335.23h0.60v1.17h-0.60zM283.80 334.60h1.20v1.80h-1.20zM285.50 334.60h1.00v1.80h-1.00zM287.40 335.23h1.50v1.17h-1.50zM289.60 334.60h0.60v1.80h-0.60zM290.70 334.60h0.80v1.80h-0.80zM292.40 335.23h1.50v1.17h-1.50zM294.40 334.60h1.20v1.80h-1.20zM296.10 335.23h0.90v1.17h-0.90z" fill="#474747" fill-opacity="1.0"/>
<path d="M307.00 335.23h0.60v1.17h-0.60zM308.10 335.23h1.00v1.17h-1.00zM309.80 334.60h1.20v1.80h-1.20zM311.50 335.23h0.60v1.17h-0.60zM312.60 334.60h1.50v1.80h-1.50zM314.60 334.60h0.80v1.80h-0.80zM315.90 335.23h0.60v1.17h-0.60zM317.40 334.60h0.80v1.80h-0.80z" fill="#474747" fill-opacity="1.0"/>
<path d="M265.00 339.60h1.00v1.80h-1.00zM266.70 340.23h0.80v1.17h-0.80zM268.00 340.23h1.20v1.17h-1.20zM269.70 339.60h0.80v1.80h-0.80zM271.40 339.60h1.50v1.80h-1.50zM273.40 339.60h1.50v1.80h-1.50zM275.60 339.60h0.80v1.80h-0.80zM276.90 339.60h0.80v1.80h-0.80zM279.10 339.60h1.20v1.80h-1.20zM281.70 339.60h0.80v1.80h-0.80zM283.20 340.23h1.20v1.17h-1.20zM286.20 339.60h0.80v1.80h-0.80zM287.90 340.23h0.60v1.17h-0.60zM290.10 339.60h1.00v1.80h-1.00zM291.80 340.23h1.50v1.17h-1.50zM294.90 339.60h0.80v1.80h-0.80zM296.20 340.23h1.00v1.17h-1.00z" fill="#474747" fill-opacity="1.0"/>
<path d="M307.00 340.23h1.00v1.17h-1.00zM308.50 339.60h1.20v1.80h-1.20zM310.40 339.60h0.60v1.80h-0.60zM311.50 339.60h0.60v1.80h-0.60zM312.60 339.60h1.00v1.80h-1.00zM314.30 339.60h1.20v1.80h-1.20zM316.20 339.60h0.60v1.80h-0.60zM317.70 339.60h1.30v1.80h-1.30z" fill="#474747" fill-opacity="1.0"/>
<path d="M265.00 344.60h1.50v1.80h-1.50zM267.40 344.60h0.60v1.80h-0.60zM268.70 344.60h0.80v1.80h-0.80zM270.40 344.60h0.80v1.80h-0.80zM272.10 344.60h0.60v1.80h-0.60zM273.60 344.60h1.00v1.80h-1.00zM275.10 344.60h0.80v1.80h-0.80zM276.60 344.60h1.50v1.80h-1.50zM278.80 344.60h0.60v1.80h-0.60zM279.90 344.60h1.20v1.80h-1.20zM281.80 345.23h0.80v1.17h-0.80zM283.30 344.60h1.20v1.80h-1.20zM286.60 344.60h0.80v1.80h-0.80zM288.30 345.23h1.50v1.17h-1.50zM290.70 344.60h0.60v1.80h-0.60zM292.00 345.23h1.00v1.17h-1.00zM293.50 344.60h0.80v1.80h-0.80zM295.00 344.60h1.00v1.80h-1.00zM296.90 344.60h1.50v1.80h-1.50z" fill="#474747" fill-opacity="1.0"/>
<path d="M307.00 345.23h1.20v1.17h-1.20zM308.70 344.60h0.60v1.80h-0.60zM310.20 344.60h1.00v1.80h-1.00zM312.10 345.23h1.50v1.17h-1.50zM315.70 345.23h1.20v1.17h-1.20zM317.60 344.60h1.20v1.80h-1.20zM319.30 344.60h1.20v1.80h-1.20z" fill="#474747" fill-opacity="1.0"/>
<path d="M307.00 394.25h0.60v1.50h-0.60zM308.10 394.77h1.50v0.98h-1.50zM310.50 394.25h0.80v1.50h-0.80z" fill="#a4a8a5" fill-opacity="1.0"/>
<path d="M265.00 399.27h1.00v0.98h-1.00zM266.70 398.75h0.80v1.50h-0.80zM268.40 399.27h0.60v0.98h-0.60z" fill="#a4a8a5" fill-opacity="1.0"/>
<path d="M265.00 401.73h1.00v1.17h-1.00zM266.90 401.10h0.60v1.80h-0.60zM268.40 401.10h0.60v1.80h-0.60zM269.70 401.10h1.20v1.80h-1.20zM271.80 401.10h1.00v1.80h-1.00zM273.50 401.73h0.60v1.17h-0.60zM274.60 401.10h0.80v1.80h-0.80zM275.90 401.73h1.00v1.17h-1.00zM277.60 401.10h0.60v1.80h-0.60zM278.90 401.10h0.80v1.80h-0.80zM280.40 401.10h0.80v1.80h-0.80z" fill="#474747" fill-opacity="1.0"/>
<path d="M265.00 403.60h0.60v1.80h-0.60zM266.30 403.60h1.20v1.80h-1.20zM268.00 403.60h0.80v1.80h-0.80zM269.70 403.60h1.20v1.80h-1.20zM271.60 403.60h0.60v1.80h-0.60zM272.90 403.60h1.50v1.80h-1.50zM274.90 403.60h1.00v1.80h-1.00zM276.60 403.60h1.50v1.80h-1.50zM278.60 404.23h1.00v1.17h-1.00zM280.50 403.60h1.50v1.80h-1.50zM282.70 403.60h1.00v1.80h-1.00z" fill="#474747" fill-opacity="1.0"/>
<path d="M265.00 406.10h0.60v1.80h-0.60zM266.30 406.73h0.60v1.17h-0.60zM267.40 406.10h0.60v1.80h-0.60zM268.90 406.10h1.00v1.80h-1.00zM270.60 406.10h1.00v1.80h-1.00zM272.10 406.10h1.50v1.80h-1.50zM274.30 406.10h0.80v1.80h-0.80zM275.80 406.10h0.60v1.80h-0.60zM277.30 406.10h0.80v1.80h-0.80zM279.00 406.10h1.00v1.80h-1.00zM280.50 406.10h0.80v1.80h-0.80zM281.80 406.73h1.50v1.17h-1.50zM283.80 406.73h1.20v1.17h-1.20zM285.90 406.73h1.20v1.17h-1.20zM287.60 406.10h1.50v1.80h-1.50zM290.00 406.73h0.80v1.17h-0.80z" fill="#474747" fill-opacity="1.0"/>
<path d="M298.00 406.10h1.50v1.80h-1.50zM300.20 406.73h0.60v1.17h-0.60zM302.40 406.73h1.20v1.17h-1.20zM304.30 406.10h1.50v1.80h-1.50zM306.30 406.73h1.50v1.17h-1.50zM308.30 406.73h1.00v1.17h-1.00zM310.00 406.73h1.50v1.17h-1.50zM312.00 406.10h1.00v1.80h-1.00zM313.90 406.73h0.60v1.17h-0.60zM315.40 406.73h1.00v1.17h-1.00zM317.30 406.10h1.00v1.80h-1.00zM319.00 406.10h1.20v1.80h-1.20zM320.70 406.10h0.60v1.80h-0.60z" fill="#474747" fill-opacity="1.0"/>
<path d="M265.00 408.60h1.00v1.80h-1.00zM266.50 408.60h1.20v1.80h-1.20zM268.60 409.23h1.50v1.17h-1.50zM270.60 409.23h0.60v1.17h-0.60zM271.70 408.60h0.60v1.80h-0.60zM273.00 408.60h0.80v1.80h-0.80zM274.50 408.60h0.80v1.80h-0.80zM276.00 408.60h0.60v1.80h-0.60zM279.80 409.23h1.50v1.17h-1.50zM282.20 409.23h1.00v1.17h-1.00zM283.70 408.60h0.80v1.80h-0.80zM285.00 409.23h1.20v1.17h-1.20zM286.70 408.60h1.00v1.80h-1.00zM288.20 408.60h1.00v1.80h-1.00zM289.70 409.23h0.60v1.17h-0.60z" fill="#474747" fill-opacity="1.0"/>
<path d="M298.00 408.60h0.80v1.80h-0.80zM299.30 408.60h1.00v1.80h-1.00zM301.00 408.60h1.20v1.80h-1.20zM302.90 409.23h0.80v1.17h-0.80zM304.60 409.23h1.50v1.17h-1.50zM306.60 409.23h1.20v1.17h-1.20zM308.70 408.60h1.50v1.80h-1.50zM310.90 408.60h1.50v1.80h-1.50zM314.20 409.23h1.00v1.17h-1.00zM316.10 408.60h0.80v1.80h-0.80zM317.80 408.60h1.50v1.80h-1.50zM320.00 408.60h0.60v1.80h-0.60z" fill="#474747" fill-opacity="1.0"/>
<path d="M288.00 413.75h0.80v1.50h-0.80zM289.70 413.75h0.80v1.50h-0.80zM291.20 413.75h1.50v1.50h-1.50zM295.40 413.75h0.60v1.50h-0.60zM297.40 413.75h1.20v1.50h-1.20zM299.10 413.75h0.60v1.50h-0.60zM301.80 413.75h0.60v1.50h-0.60zM303.30 413.75h0.60v1.50h-0.60zM304.40 414.27h1.50v0.98h-1.50zM307.50 414.27h1.50v0.98h-1.50zM309.90 413.75h1.50v1.50h-1.50zM312.30 413.75h0.60v1.50h-0.60zM313.80 413.75h1.00v1.50h-1.00zM317.10 413.75h0.80v1.50h-0.80zM318.40 413.75h1.20v1.50h-1.20zM320.10 413.75h1.50v1.50h-1.50zM322.10 413.75h0.80v1.50h-0.80zM323.40 414.27h0.60v0.98h-0.60z" fill="#a4a8a5" fill-opacity="1.0"/>
<path d="M265.00 418.75h0.80v1.50h-0.80zM266.50 419.27h0.80v0.98h-0.80zM267.80 418.75h1.50v1.50h-1.50zM270.00 419.27h1.50v0.98h-1.50zM272.40 418.75h0.60v1.50h-0.60z" fill="#a4a8a5" fill-opacity="1.0"/>
<path d="M278.00 419.23h0.60v1.17h-0.60zM279.30 418.60h0.60v1.80h-0.60zM280.60 419.23h1.00v1.17h-1.00zM283.70 419.23h0.60v1.17h-0.60zM285.20 418.60h1.20v1.80h-1.20zM287.10 419.23h1.00v1.17h-1.00zM289.00 418.60h0.60v1.80h-0.60zM290.30 418.60h1.00v1.80h-1.00zM291.80 418.60h1.00v1.80h-1.00z" fill="#474747" fill-opacity="1.0"/>
<path d="M265.00 421.77h0.60v0.98h-0.60zM266.50 421.25h1.00v1.50h-1.00zM268.20 421.77h0.80v0.98h-0.80zM269.90 421.25h1.50v1.50h-1.50z" fill="#a4a8a5" fill-opacity="1.0"/>
<path d="M279.00 421.73h0.60v1.17h-0.60zM280.10 421.73h1.00v1.17h-1.00zM281.60 421.10h1.50v1.80h-1.50zM284.00 421.73h1.00v1.17h-1.00zM285.70 421.10h0.60v1.80h-0.60zM287.20 421.10h1.00v1.80h-1.00zM289.10 421.73h1.50v1.17h-1.50zM291.10 421.73h1.20v1.17h-1.20zM294.20 421.73h0.60v1.17h-0.60zM295.50 421.73h1.50v1.17h-1.50zM297.70 421.73h0.80v1.17h-0.80zM299.20 421.73h1.20v1.17h-1.20zM301.30 421.10h0.60v1.80h-0.60zM303.50 421.10h0.60v1.80h-0.60zM305.00 421.73h1.00v1.17h-1.00zM306.50 421.73h0.60v1.17h-0.60zM308.00 421.73h1.50v1.17h-1.50zM310.00 421.10h0.80v1.80h-0.80zM311.30 421.73h1.20v1.17h-1.20zM314.80 421.10h0.60v1.80h-0.60zM316.10 421.73h1.00v1.17h-1.00zM317.80 421.73h1.00v1.17h-1.00zM319.70 421.10h0.60v1.80h-0.60zM320.80 421.10h1.00v1.80h-1.00zM322.30 421.10h0.80v1.80h-0.80zM323.80 421.10h1.00v1.80h-1.00zM325.50 421.10h0.50v1.80h-0.50z" fill="#474747" fill-opacity="1.0"/>
<path d="M278.00 428.60h0.80v1.80h-0.80zM279.50 428.60h0.60v1.80h-0.60zM280.80 428.60h0.60v1.80h-0.60zM281.90 429.23h0.80v1.17h-0.80zM283.20 428.60h0.60v1.80h-0.60zM284.30 429.23h1.00v1.17h-1.00zM285.80 428.60h1.20v1.80h-1.20zM290.00 429.23h1.50v1.17h-1.50zM292.00 428.60h1.20v1.80h-1.20zM295.30 429.23h1.00v1.17h-1.00zM297.00 428.60h0.60v1.80h-0.60zM298.30 429.23h1.00v1.17h-1.00zM300.20 428.60h1.50v1.80h-1.50zM302.60 429.23h0.60v1.17h-0.60zM303.90 428.60h1.50v1.80h-1.50zM306.10 428.60h1.00v1.80h-1.00zM307.80 429.23h0.80v1.17h-0.80zM309.30 428.60h0.60v1.80h-0.60zM310.60 428.60h1.20v1.80h-1.20zM312.50 428.60h1.00v1.80h-1.00zM314.20 429.23h0.60v1.17h-0.60zM316.90 428.60h1.50v1.80h-1.50zM319.30 429.23h0.80v1.17h-0.80zM320.80 428.60h0.80v1.80h-0.80zM322.30 428.60h0.80v1.80h-0.80zM323.60 428.60h1.20v1.80h-1.20z" fill="#474747" fill-opacity="1.0"/>
<path d="M278.00 436.10h0.60v1.80h-0.60zM279.10 436.10h0.60v1.80h-0.60zM280.60 436.10h1.20v1.80h-1.20z" fill="#474747" fill-opacity="1.0"/>
<path d="M304.00 436.10h0.80v1.80h-0.80zM305.50 436.73h1.20v1.17h-1.20zM307.60 436.10h0.80v1.80h-0.80zM308.90 436.73h0.80v1.17h-0.80zM310.60 436.73h1.20v1.17h-1.20zM312.70 436.10h0.80v1.80h-0.80zM314.20 436.10h1.20v1.80h-1.20zM315.90 436.73h0.60v1.17h-0.60zM317.00 436.10h0.80v1.80h-0.80z" fill="#474747" fill-opacity="1.0"/>
<path d="M324.00 436.10h1.50v1.80h-1.50zM326.20 436.10h1.50v1.80h-1.50zM328.60 436.73h1.50v1.17h-1.50zM330.80 436.10h1.50v1.80h-1.50zM333.00 436.10h0.80v1.80h-0.80zM334.50 436.73h0.60v1.17h-0.60zM336.00 436.73h1.20v1.17h-1.20zM337.70 436.10h1.20v1.80h-1.20zM339.80 436.73h0.80v1.17h-0.80zM341.10 436.10h1.20v1.80h-1.20z" fill="#474747" fill-opacity="1.0"/>
<path d="M278.00 443.23h1.20v1.17h-1.20zM280.10 442.60h0.80v1.80h-0.80zM281.60 443.23h1.20v1.17h-1.20zM283.30 443.23h0.80v1.17h-0.80zM285.00 442.60h0.80v1.80h-0.80zM286.70 442.60h0.60v1.80h-0.60zM288.00 443.23h1.50v1.17h-1.50zM290.20 442.60h1.00v1.80h-1.00zM291.70 443.23h0.80v1.17h-0.80zM293.40 442.60h1.00v1.80h-1.00zM295.30 442.60h0.80v1.80h-0.80zM296.60 443.23h1.00v1.17h-1.00zM298.30 442.60h0.80v1.80h-0.80zM300.90 442.60h1.50v1.80h-1.50zM303.10 443.23h0.60v1.17h-0.60z" fill="#474747" fill-opacity="1.0"/>
<path d="M310.00 443.23h0.60v1.17h-0.60zM311.10 442.60h0.80v1.80h-0.80zM312.40 443.23h0.60v1.17h-0.60zM313.50 443.23h0.80v1.17h-0.80zM315.20 442.60h1.00v1.80h-1.00zM316.90 442.60h1.00v1.80h-1.00zM318.60 443.23h0.80v1.17h-0.80zM319.90 442.60h1.00v1.80h-1.00zM321.60 443.23h1.00v1.17h-1.00zM323.50 442.60h1.50v1.80h-1.50zM325.90 442.60h1.20v1.80h-1.20zM327.60 442.60h1.00v1.80h-1.00z" fill="#474747" fill-opacity="1.0"/>
<path d="M278.00 450.73h0.60v1.17h-0.60zM279.50 450.10h1.20v1.80h-1.20zM281.20 450.10h1.50v1.80h-1.50zM283.60 450.73h1.20v1.17h-1.20zM285.70 450.10h0.80v1.80h-0.80zM287.00 450.10h1.00v1.80h-1.00zM289.60 450.73h0.80v1.17h-0.80zM291.30 450.10h1.20v1.80h-1.20zM293.00 450.10h1.00v1.80h-1.00zM295.90 450.10h1.00v1.80h-1.00zM297.80 450.10h1.00v1.80h-1.00zM299.50 450.73h0.60v1.17h-0.60zM300.80 450.73h0.60v1.17h-0.60zM301.90 450.73h0.80v1.17h-0.80zM303.20 450.10h1.50v1.80h-1.50zM305.60 450.10h1.20v1.80h-1.20zM307.30 450.10h0.60v1.80h-0.60zM308.40 450.10h1.00v1.80h-1.00zM310.10 450.10h1.00v1.80h-1.00zM311.80 450.10h1.00v1.80h-1.00zM313.70 450.73h1.00v1.17h-1.00zM315.40 450.73h0.60v1.17h-0.60zM316.50 450.10h1.50v1.80h-1.50zM318.90 450.73h0.60v1.17h-0.60zM320.40 450.73h1.00v1.17h-1.00zM322.10 450.10h0.60v1.80h-0.60zM323.20 450.10h1.00v1.80h-1.00zM325.10 450.73h0.60v1.17h-0.60zM326.60 450.73h1.50v1.17h-1.50zM328.60 450.10h1.20v1.80h-1.20zM330.50 450.73h1.00v1.17h-1.00zM332.40 450.10h0.60v1.80h-0.60zM333.90 450.10h1.20v1.80h-1.20zM336.00 450.10h1.00v1.80h-1.00zM337.50 450.10h0.80v1.80h-0.80zM339.00 450.10h0.60v1.80h-0.60zM340.10 450.10h0.60v1.80h-0.60zM341.60 450.10h0.80v1.80h-0.80zM343.10 450.10h0.80v1.80h-0.80zM344.80 450.73h0.80v1.17h-0.80z" fill="#474747" fill-opacity="1.0"/>
<path d="M265.00 455.77h0.80v0.98h-0.80zM266.50 455.77h1.50v0.98h-1.50zM268.70 455.25h0.80v1.50h-0.80zM270.20 455.25h1.00v1.50h-1.00zM271.90 455.25h1.20v1.50h-1.20zM273.60 455.25h1.20v1.50h-1.20zM275.70 455.25h0.80v1.50h-0.80zM277.00 455.25h0.80v1.50h-0.80zM278.50 455.25h1.50v1.50h-1.50zM280.70 455.25h0.80v1.50h-0.80zM282.40 455.25h0.60v1.50h-0.60zM283.70 455.25h0.80v1.50h-0.80z" fill="#a4a8a5" fill-opacity="1.0"/>
<path d="M278.00 460.23h1.50v1.17h-1.50zM280.40 459.60h1.20v1.80h-1.20zM282.30 459.60h0.70v1.80h-0.70z" fill="#474747" fill-opacity="1.0"/>
<path d="M300.00 459.60h0.60v1.80h-0.60zM301.10 459.60h0.80v1.80h-0.80zM302.60 459.60h0.60v1.80h-0.60zM303.90 459.60h1.00v1.80h-1.00zM305.60 459.60h1.50v1.80h-1.50zM308.00 459.60h1.00v1.80h-1.00zM309.50 459.60h1.50v1.80h-1.50zM311.90 459.60h0.60v1.80h-0.60zM313.40 459.60h0.80v1.80h-0.80zM314.90 459.60h0.60v1.80h-0.60zM316.20 460.23h1.50v1.17h-1.50z" fill="#474747" fill-opacity="1.0"/>
<path d="M324.00 460.23h1.20v1.17h-1.20zM325.90 459.60h1.50v1.80h-1.50zM327.90 460.23h1.50v1.17h-1.50zM330.30 459.60h1.20v1.80h-1.20zM332.00 460.23h1.20v1.17h-1.20zM333.90 460.23h1.50v1.17h-1.50zM337.20 459.60h1.50v1.80h-1.50zM339.60 459.60h0.80v1.80h-0.80zM341.30 459.60h0.60v1.80h-0.60zM342.40 459.60h0.80v1.80h-0.80z" fill="#474747" fill-opacity="1.0"/>
<path d="M278.00 467.60h0.80v1.80h-0.80zM279.70 467.60h0.80v1.80h-0.80zM281.00 467.60h1.20v1.80h-1.20z" fill="#474747" fill-opacity="1.0"/>
<path d="M300.00 468.23h1.00v1.17h-1.00zM301.90 467.60h1.20v1.80h-1.20zM303.80 468.23h0.80v1.17h-0.80zM305.30 468.23h0.80v1.17h-0.80zM307.00 468.23h0.80v1.17h-0.80zM308.70 467.60h0.60v1.80h-0.60zM310.20 467.60h0.80v1.80h-0.80zM311.90 468.23h0.60v1.17h-0.60zM313.00 467.60h0.60v1.80h-0.60zM314.30 468.23h0.80v1.17h-0.80zM315.60 467.60h1.50v1.80h-1.50zM317.60 467.60h0.80v1.80h-0.80z" fill="#474747" fill-opacity="1.0"/>
<path d="M324.00 468.23h1.50v1.17h-1.50zM326.40 468.23h0.80v1.17h-0.80zM328.10 468.23h1.00v1.17h-1.00zM329.80 467.60h1.20v1.80h-1.20zM331.90 468.23h1.20v1.17h-1.20zM334.00 467.60h0.80v1.80h-0.80zM335.70 467.60h0.80v1.80h-0.80zM337.20 467.60h0.60v1.80h-0.60zM338.50 467.60h1.00v1.80h-1.00zM340.20 467.60h0.80v1.80h-0.80zM341.90 467.60h0.60v1.80h-0.60zM343.20 467.60h0.80v1.80h-0.80z" fill="#474747" fill-opacity="1.0"/>
<path d="M271.00 93.80h1.20v1.40h-1.20zM272.70 93.80h1.50v1.40h-1.50zM274.70 93.80h0.80v1.40h-0.80zM276.20 93.80h0.80v1.40h-0.80z" fill="#7a7a7a" fill-opacity="1.0"/>
<path d="M271.00 98.80h0.80v1.40h-0.80zM272.30 98.80h1.00v1.40h-1.00zM273.80 98.80h1.50v1.40h-1.50z" fill="#7a7a7a" fill-opacity="1.0"/>
<path d="M271.00 100.80h1.00v1.40h-1.00zM272.70 100.80h1.50v1.40h-1.50zM275.10 101.29h1.20v0.91h-1.20z" fill="#7a7a7a" fill-opacity="1.0"/>
<path d="M271.00 105.80h1.50v1.40h-1.50zM273.00 106.29h1.00v0.91h-1.00zM274.90 105.80h1.10v1.40h-1.10z" fill="#7a7a7a" fill-opacity="1.0"/>
<path d="M271.00 107.80h1.20v1.40h-1.20zM272.70 108.29h0.60v0.91h-0.60zM273.80 108.29h0.80v0.91h-0.80z" fill="#7a7a7a" fill-opacity="1.0"/>
<path d="M271.00 112.80h1.00v1.40h-1.00zM272.50 112.80h0.80v1.40h-0.80zM273.80 113.29h0.80v0.91h-0.80z" fill="#7a7a7a" fill-opacity="1.0"/>
<path d="M274.00 127.80h1.20v1.40h-1.20zM275.70 127.80h0.80v1.40h-0.80zM277.00 128.29h0.60v0.91h-0.60zM278.10 127.80h1.00v1.40h-1.00zM279.60 128.29h1.20v0.91h-1.20zM281.70 127.80h1.00v1.40h-1.00zM283.40 127.80h0.60v1.40h-0.60z" fill="#7a7a7a" fill-opacity="1.0"/>
<path d="M270.00 133.29h1.20v0.91h-1.20zM271.70 132.80h0.80v1.40h-0.80zM273.20 132.80h0.60v1.40h-0.60zM274.30 132.80h1.20v1.40h-1.20zM276.00 133.29h1.20v0.91h-1.20zM278.10 132.80h1.00v1.40h-1.00zM279.60 132.80h0.60v1.40h-0.60zM280.70 132.80h1.20v1.40h-1.20zM282.80 132.80h0.60v1.40h-0.60zM284.30 132.80h1.50v1.40h-1.50zM286.50 133.29h1.20v0.91h-1.20zM288.40 132.80h1.20v1.40h-1.20z" fill="#7a7a7a" fill-opacity="1.0"/>
<path d="M276.00 134.80h1.50v1.40h-1.50zM278.00 135.29h1.00v0.91h-1.00zM279.90 134.80h1.10v1.40h-1.10z" fill="#7a7a7a" fill-opacity="1.0"/>
<path d="M270.00 139.80h1.00v1.40h-1.00zM271.70 139.80h1.50v1.40h-1.50zM274.10 139.80h1.20v1.40h-1.20zM275.80 139.80h1.20v1.40h-1.20zM277.50 139.80h1.20v1.40h-1.20zM279.40 139.80h1.50v1.40h-1.50zM281.40 140.29h0.60v0.91h-0.60zM282.70 139.80h1.00v1.40h-1.00zM284.40 139.80h1.20v1.40h-1.20zM286.10 140.29h1.20v0.91h-1.20zM288.00 139.80h1.00v1.40h-1.00zM289.70 139.80h1.00v1.40h-1.00z" fill="#7a7a7a" fill-opacity="1.0"/>
<path d="M281.00 433.80h1.50v1.40h-1.50zM283.40 433.80h1.00v1.40h-1.00zM285.10 434.29h1.20v0.91h-1.20zM287.70 433.80h1.00v1.40h-1.00zM289.20 434.29h0.80v0.91h-0.80z" fill="#7a7a7a" fill-opacity="1.0"/>
<path d="M281.00 438.80h0.60v1.40h-0.60zM282.10 438.80h0.80v1.40h-0.80zM283.80 439.29h0.60v0.91h-0.60zM285.30 438.80h0.80v1.40h-0.80zM286.60 439.29h0.80v0.91h-0.80zM287.90 439.29h0.80v0.91h-0.80zM289.20 439.29h1.00v0.91h-1.00zM290.70 438.80h1.50v1.40h-1.50zM292.70 438.80h1.20v1.40h-1.20zM294.60 438.80h0.80v1.40h-0.80zM296.10 439.29h0.60v0.91h-0.60zM297.40 438.80h1.20v1.40h-1.20zM299.30 439.29h0.80v0.91h-0.80zM300.80 438.80h1.20v1.40h-1.20z" fill="#7a7a7a" fill-opacity="1.0"/>
<path d="M284.00 457.79h1.20v0.91h-1.20zM285.90 457.30h0.60v1.40h-0.60zM287.40 457.30h1.00v1.40h-1.00zM289.10 457.30h1.20v1.40h-1.20zM290.80 457.30h1.20v1.40h-1.20zM292.70 457.79h1.50v0.91h-1.50z" fill="#7a7a7a" fill-opacity="1.0"/>
<path d="M282.00 462.79h1.00v0.91h-1.00zM283.70 462.30h1.20v1.40h-1.20zM285.80 462.30h1.00v1.40h-1.00zM287.30 462.30h1.50v1.40h-1.50zM289.30 462.79h1.00v0.91h-1.00zM291.00 462.30h0.80v1.40h-0.80zM292.50 462.79h0.60v0.91h-0.60zM294.00 462.30h1.50v1.40h-1.50zM296.00 462.30h0.60v1.40h-0.60zM297.10 462.79h1.50v0.91h-1.50z" fill="#7a7a7a" fill-opacity="1.0"/>
<path d="M287.00 465.79h1.20v0.91h-1.20zM289.10 465.30h0.60v1.40h-0.60zM290.60 465.79h1.40v0.91h-1.40z" fill="#7a7a7a" fill-opacity="1.0"/>
<path d="M282.00 470.30h0.80v1.40h-0.80zM283.30 470.79h0.60v0.91h-0.60zM284.80 470.30h1.50v1.40h-1.50zM287.00 470.79h1.20v0.91h-1.20zM289.10 470.30h1.20v1.40h-1.20zM291.00 470.30h1.50v1.40h-1.50zM293.40 470.30h0.60v1.40h-0.60zM294.70 470.30h1.50v1.40h-1.50zM296.90 470.30h1.00v1.40h-1.00z" fill="#7a7a7a" fill-opacity="1.0"/>
<path d="M316.00 295.79h1.00v0.91h-1.00zM317.50 295.30h0.80v1.40h-0.80zM318.80 295.30h0.80v1.40h-0.80zM320.10 295.30h1.50v1.40h-1.50zM322.10 295.79h0.60v0.91h-0.60zM323.20 295.30h0.80v1.40h-0.80zM324.50 295.30h1.20v1.40h-1.20z" fill="#7a7a7a" fill-opacity="1.0"/>
<path d="M318.00 300.30h0.60v1.40h-0.60zM319.10 300.79h1.20v0.91h-1.20zM320.80 300.79h1.50v0.91h-1.50zM323.00 300.30h0.60v1.40h-0.60z" fill="#7a7a7a" fill-opacity="1.0"/>
<path d="M329.00 295.79h0.60v0.91h-0.60zM330.50 295.79h1.20v0.91h-1.20zM332.40 295.30h1.20v1.40h-1.20zM334.50 295.79h1.50v0.91h-1.50zM336.50 295.30h1.20v1.40h-1.20z" fill="#7a7a7a" fill-opacity="1.0"/>
<path d="M331.00 300.30h0.80v1.40h-0.80zM332.50 300.79h1.50v0.91h-1.50zM334.90 300.79h0.80v0.91h-0.80z" fill="#7a7a7a" fill-opacity="1.0"/>
<path d="M266.00 318.30h0.80v1.40h-0.80zM267.30 318.79h0.80v0.91h-0.80zM268.60 318.30h1.20v1.40h-1.20zM270.70 318.79h1.00v0.91h-1.00z" fill="#7a7a7a" fill-opacity="1.0"/>
<path d="M268.00 322.30h1.00v1.40h-1.00z" fill="#7a7a7a" fill-opacity="1.0"/>
<path d="M358.5 155.8h1.2v1.3h-1.2zM360.1 155.8h1.2v1.3h-1.2zM361.5 156.1h0.9v0.5h-0.9z" fill="#666"/>
<path d="M363.7 153.4h-0.7v5.4h0.7M371.7 153.4h0.7v5.4h-0.7" stroke="#555" stroke-width="0.45" fill="none"/>
<path d="M364.20 154.1h0.8v1.3h-0.8zM365.35 154.1h0.6v1.3h-0.6zM366.30 154.1h0.6v1.3h-0.6zM367.25 154.1h0.6v1.3h-0.6zM368.20 154.1h0.6v1.3h-0.6zM369.15 154.1h0.6v1.3h-0.6zM370.10 154.1h1.0v1.3h-1.0zM364.20 156.7h0.6v1.3h-0.6zM365.15 156.7h0.8v1.3h-0.8zM366.30 156.7h1.0v1.3h-1.0zM367.65 156.7h0.6v1.3h-0.6zM368.60 156.7h0.8v1.3h-0.8zM369.75 156.7h1.0v1.3h-1.0z" fill="#5a5a5a"/>
<path d="M377.7 155.8h1.2v1.3h-1.2zM379.3 155.8h1.2v1.3h-1.2zM380.7 156.1h0.9v0.5h-0.9z" fill="#666"/>
<path d="M382.9 153.4h-0.7v5.4h0.7M391.90000000000003 153.4h0.7v5.4h-0.7" stroke="#555" stroke-width="0.45" fill="none"/>
<path d="M383.40 154.1h1.0v1.3h-1.0zM384.75 154.1h0.8v1.3h-0.8zM385.90 154.1h0.8v1.3h-0.8zM387.05 154.1h0.6v1.3h-0.6zM388.00 154.1h0.6v1.3h-0.6zM388.95 154.1h1.0v1.3h-1.0zM390.30 154.1h0.8v1.3h-0.8zM383.40 156.7h1.0v1.3h-1.0zM384.75 156.7h0.8v1.3h-0.8zM385.90 156.7h0.8v1.3h-0.8zM387.05 156.7h0.6v1.3h-0.6zM388.00 156.7h1.0v1.3h-1.0zM389.35 156.7h0.8v1.3h-0.8zM390.50 156.7h0.6v1.3h-0.6z" fill="#5a5a5a"/>
<path d="M358.5 163.20000000000002h1.2v1.3h-1.2zM360.1 163.20000000000002h1.2v1.3h-1.2zM361.5 163.5h0.9v0.5h-0.9z" fill="#666"/>
<path d="M363.7 160.8h-0.7v5.4h0.7M371.7 160.8h0.7v5.4h-0.7" stroke="#555" stroke-width="0.45" fill="none"/>
<path d="M364.20 161.5h0.6v1.3h-0.6zM365.15 161.5h0.6v1.3h-0.6zM366.10 161.5h0.8v1.3h-0.8zM367.25 161.5h0.8v1.3h-0.8zM368.40 161.5h0.6v1.3h-0.6zM369.35 161.5h1.0v1.3h-1.0zM370.70 161.5h1.0v1.3h-1.0zM364.20 164.1h0.6v1.3h-0.6zM365.15 164.1h1.0v1.3h-1.0zM366.50 164.1h0.6v1.3h-0.6zM367.45 164.1h1.0v1.3h-1.0zM368.80 164.1h1.0v1.3h-1.0zM370.15 164.1h0.6v1.3h-0.6z" fill="#5a5a5a"/>
<path d="M377.7 163.20000000000002h1.2v1.3h-1.2zM379.3 163.20000000000002h1.2v1.3h-1.2zM380.7 163.5h0.9v0.5h-0.9z" fill="#666"/>
<path d="M382.9 160.8h-0.7v5.4h0.7M391.90000000000003 160.8h0.7v5.4h-0.7" stroke="#555" stroke-width="0.45" fill="none"/>
<path d="M383.40 161.5h1.0v1.3h-1.0zM384.75 161.5h0.6v1.3h-0.6zM385.70 161.5h0.6v1.3h-0.6zM386.65 161.5h0.8v1.3h-0.8zM387.80 161.5h0.6v1.3h-0.6zM388.75 161.5h0.6v1.3h-0.6zM389.70 161.5h0.6v1.3h-0.6zM390.65 161.5h1.0v1.3h-1.0zM383.40 164.1h1.0v1.3h-1.0zM384.75 164.1h0.8v1.3h-0.8zM385.90 164.1h0.8v1.3h-0.8zM387.05 164.1h0.6v1.3h-0.6zM388.00 164.1h1.0v1.3h-1.0zM389.35 164.1h0.8v1.3h-0.8zM390.50 164.1h0.8v1.3h-0.8z" fill="#5a5a5a"/>
<path d="M358.5 170.60000000000002h1.2v1.3h-1.2zM360.1 170.60000000000002h1.2v1.3h-1.2zM361.5 170.9h0.9v0.5h-0.9z" fill="#666"/>
<path d="M363.7 168.20000000000002h-0.7v5.4h0.7M371.7 168.20000000000002h0.7v5.4h-0.7" stroke="#555" stroke-width="0.45" fill="none"/>
<path d="M364.20 168.9h1.0v1.3h-1.0zM365.55 168.9h0.8v1.3h-0.8zM366.70 168.9h0.6v1.3h-0.6zM367.65 168.9h0.8v1.3h-0.8zM368.80 168.9h0.8v1.3h-0.8zM369.95 168.9h0.6v1.3h-0.6zM370.90 168.9h0.6v1.3h-0.6zM364.20 171.5h0.6v1.3h-0.6zM365.15 171.5h0.6v1.3h-0.6zM366.10 171.5h1.0v1.3h-1.0zM367.45 171.5h1.0v1.3h-1.0zM368.80 171.5h0.8v1.3h-0.8zM369.95 171.5h0.6v1.3h-0.6zM370.90 171.5h1.0v1.3h-1.0z" fill="#5a5a5a"/>
<path d="M377.7 170.60000000000002h1.2v1.3h-1.2zM379.3 170.60000000000002h1.2v1.3h-1.2zM380.7 170.9h0.9v0.5h-0.9z" fill="#666"/>
<path d="M382.9 168.20000000000002h-0.7v5.4h0.7M391.90000000000003 168.20000000000002h0.7v5.4h-0.7" stroke="#555" stroke-width="0.45" fill="none"/>
<path d="M383.40 168.9h0.6v1.3h-0.6zM384.35 168.9h1.0v1.3h-1.0zM385.70 168.9h0.8v1.3h-0.8zM386.85 168.9h1.0v1.3h-1.0zM388.20 168.9h0.6v1.3h-0.6zM389.15 168.9h0.6v1.3h-0.6zM390.10 168.9h0.8v1.3h-0.8zM383.40 171.5h0.6v1.3h-0.6zM384.35 171.5h1.0v1.3h-1.0zM385.70 171.5h0.6v1.3h-0.6zM386.65 171.5h0.6v1.3h-0.6zM387.60 171.5h0.6v1.3h-0.6zM388.55 171.5h0.6v1.3h-0.6zM389.50 171.5h0.8v1.3h-0.8zM390.65 171.5h0.6v1.3h-0.6z" fill="#5a5a5a"/>
<path d="M358.5 178.0h1.2v1.3h-1.2zM360.1 178.0h1.2v1.3h-1.2zM361.5 178.29999999999998h0.9v0.5h-0.9z" fill="#666"/>
<path d="M363.7 175.6h-0.7v5.4h0.7M371.7 175.6h0.7v5.4h-0.7" stroke="#555" stroke-width="0.45" fill="none"/>
<path d="M364.20 176.29999999999998h0.8v1.3h-0.8zM365.35 176.29999999999998h1.0v1.3h-1.0zM366.70 176.29999999999998h0.8v1.3h-0.8zM367.85 176.29999999999998h1.0v1.3h-1.0zM369.20 176.29999999999998h1.0v1.3h-1.0zM370.55 176.29999999999998h1.0v1.3h-1.0zM364.20 178.89999999999998h0.8v1.3h-0.8zM365.35 178.89999999999998h1.0v1.3h-1.0zM366.70 178.89999999999998h1.0v1.3h-1.0zM368.05 178.89999999999998h1.0v1.3h-1.0zM369.40 178.89999999999998h0.6v1.3h-0.6zM370.35 178.89999999999998h0.8v1.3h-0.8z" fill="#5a5a5a"/>
<path d="M377.7 178.0h1.2v1.3h-1.2zM379.3 178.0h1.2v1.3h-1.2zM380.7 178.29999999999998h0.9v0.5h-0.9z" fill="#666"/>
<path d="M382.9 175.6h-0.7v5.4h0.7M391.90000000000003 175.6h0.7v5.4h-0.7" stroke="#555" stroke-width="0.45" fill="none"/>
<path d="M383.40 176.29999999999998h1.0v1.3h-1.0zM384.75 176.29999999999998h0.6v1.3h-0.6zM385.70 176.29999999999998h0.8v1.3h-0.8zM386.85 176.29999999999998h1.0v1.3h-1.0zM388.20 176.29999999999998h0.8v1.3h-0.8zM389.35 176.29999999999998h0.6v1.3h-0.6zM390.30 176.29999999999998h0.8v1.3h-0.8zM383.40 178.89999999999998h0.8v1.3h-0.8zM384.55 178.89999999999998h1.0v1.3h-1.0zM385.90 178.89999999999998h1.0v1.3h-1.0zM387.25 178.89999999999998h1.0v1.3h-1.0zM388.60 178.89999999999998h0.6v1.3h-0.6zM389.55 178.89999999999998h1.0v1.3h-1.0zM390.90 178.89999999999998h0.8v1.3h-0.8z" fill="#5a5a5a"/>
<path d="M358.5 185.4h1.2v1.3h-1.2zM360.1 185.4h1.2v1.3h-1.2zM361.5 185.7h0.9v0.5h-0.9z" fill="#666"/>
<path d="M363.7 183.0h-0.7v5.4h0.7M371.7 183.0h0.7v5.4h-0.7" stroke="#555" stroke-width="0.45" fill="none"/>
<path d="M364.20 183.7h1.0v1.3h-1.0zM365.55 183.7h1.0v1.3h-1.0zM366.90 183.7h0.6v1.3h-0.6zM367.85 183.7h1.0v1.3h-1.0zM369.20 183.7h0.6v1.3h-0.6zM370.15 183.7h0.8v1.3h-0.8zM364.20 186.29999999999998h0.8v1.3h-0.8zM365.35 186.29999999999998h1.0v1.3h-1.0zM366.70 186.29999999999998h1.0v1.3h-1.0zM368.05 186.29999999999998h0.6v1.3h-0.6zM369.00 186.29999999999998h0.6v1.3h-0.6zM369.95 186.29999999999998h1.0v1.3h-1.0z" fill="#5a5a5a"/>
<path d="M377.7 185.4h1.2v1.3h-1.2zM379.3 185.4h1.2v1.3h-1.2zM380.7 185.7h0.9v0.5h-0.9z" fill="#666"/>
<path d="M382.9 183.0h-0.7v5.4h0.7M391.90000000000003 183.0h0.7v5.4h-0.7" stroke="#555" stroke-width="0.45" fill="none"/>
<path d="M383.40 183.7h0.8v1.3h-0.8zM384.55 183.7h0.8v1.3h-0.8zM385.70 183.7h0.6v1.3h-0.6zM386.65 183.7h1.0v1.3h-1.0zM388.00 183.7h1.0v1.3h-1.0zM389.35 183.7h0.8v1.3h-0.8zM390.50 183.7h0.8v1.3h-0.8zM383.40 186.29999999999998h1.0v1.3h-1.0zM384.75 186.29999999999998h0.8v1.3h-0.8zM385.90 186.29999999999998h0.6v1.3h-0.6zM386.85 186.29999999999998h1.0v1.3h-1.0zM388.20 186.29999999999998h1.0v1.3h-1.0zM389.55 186.29999999999998h1.0v1.3h-1.0zM390.90 186.29999999999998h0.8v1.3h-0.8z" fill="#5a5a5a"/>
<path d="M358.5 192.8h1.2v1.3h-1.2zM360.1 192.8h1.2v1.3h-1.2zM361.5 193.1h0.9v0.5h-0.9z" fill="#666"/>
<path d="M363.7 190.4h-0.7v5.4h0.7M371.7 190.4h0.7v5.4h-0.7" stroke="#555" stroke-width="0.45" fill="none"/>
<path d="M364.20 191.1h1.0v1.3h-1.0zM365.55 191.1h0.8v1.3h-0.8zM366.70 191.1h0.8v1.3h-0.8zM367.85 191.1h0.8v1.3h-0.8zM369.00 191.1h1.0v1.3h-1.0zM370.35 191.1h0.6v1.3h-0.6zM364.20 193.7h0.8v1.3h-0.8zM365.35 193.7h0.8v1.3h-0.8zM366.50 193.7h0.8v1.3h-0.8zM367.65 193.7h1.0v1.3h-1.0zM369.00 193.7h1.0v1.3h-1.0zM370.35 193.7h0.6v1.3h-0.6z" fill="#5a5a5a"/>
<path d="M377.7 192.8h1.2v1.3h-1.2zM379.3 192.8h1.2v1.3h-1.2zM380.7 193.1h0.9v0.5h-0.9z" fill="#666"/>
<path d="M382.9 190.4h-0.7v5.4h0.7M391.90000000000003 190.4h0.7v5.4h-0.7" stroke="#555" stroke-width="0.45" fill="none"/>
<path d="M383.40 191.1h1.0v1.3h-1.0zM384.75 191.1h0.8v1.3h-0.8zM385.90 191.1h0.8v1.3h-0.8zM387.05 191.1h1.0v1.3h-1.0zM388.40 191.1h0.8v1.3h-0.8zM389.55 191.1h0.8v1.3h-0.8zM390.70 191.1h0.8v1.3h-0.8zM383.40 193.7h0.6v1.3h-0.6zM384.35 193.7h0.8v1.3h-0.8zM385.50 193.7h1.0v1.3h-1.0zM386.85 193.7h1.0v1.3h-1.0zM388.20 193.7h0.6v1.3h-0.6zM389.15 193.7h0.6v1.3h-0.6zM390.10 193.7h0.8v1.3h-0.8z" fill="#5a5a5a"/>
<path d="M358.5 200.20000000000002h1.2v1.3h-1.2zM360.1 200.20000000000002h1.2v1.3h-1.2zM361.5 200.5h0.9v0.5h-0.9z" fill="#666"/>
<path d="M363.7 197.8h-0.7v5.4h0.7M371.7 197.8h0.7v5.4h-0.7" stroke="#555" stroke-width="0.45" fill="none"/>
<path d="M364.20 198.5h1.0v1.3h-1.0zM365.55 198.5h1.0v1.3h-1.0zM366.90 198.5h1.0v1.3h-1.0zM368.25 198.5h0.8v1.3h-0.8zM369.40 198.5h1.0v1.3h-1.0zM370.75 198.5h0.8v1.3h-0.8zM364.20 201.1h1.0v1.3h-1.0zM365.55 201.1h0.6v1.3h-0.6zM366.50 201.1h0.8v1.3h-0.8zM367.65 201.1h1.0v1.3h-1.0zM369.00 201.1h0.6v1.3h-0.6zM369.95 201.1h0.8v1.3h-0.8z" fill="#5a5a5a"/>
<path d="M377.7 200.20000000000002h1.2v1.3h-1.2zM379.3 200.20000000000002h1.2v1.3h-1.2zM380.7 200.5h0.9v0.5h-0.9z" fill="#666"/>
<path d="M382.9 197.8h-0.7v5.4h0.7M391.90000000000003 197.8h0.7v5.4h-0.7" stroke="#555" stroke-width="0.45" fill="none"/>
<path d="M383.40 198.5h0.8v1.3h-0.8zM384.55 198.5h0.8v1.3h-0.8zM385.70 198.5h0.6v1.3h-0.6zM386.65 198.5h0.8v1.3h-0.8zM387.80 198.5h1.0v1.3h-1.0zM389.15 198.5h1.0v1.3h-1.0zM390.50 198.5h1.0v1.3h-1.0zM383.40 201.1h0.8v1.3h-0.8zM384.55 201.1h0.6v1.3h-0.6zM385.50 201.1h0.8v1.3h-0.8zM386.65 201.1h0.8v1.3h-0.8zM387.80 201.1h0.8v1.3h-0.8zM388.95 201.1h0.6v1.3h-0.6zM389.90 201.1h1.0v1.3h-1.0z" fill="#5a5a5a"/>
<path d="M358.5 207.60000000000002h1.2v1.3h-1.2zM360.1 207.60000000000002h1.2v1.3h-1.2zM361.5 207.9h0.9v0.5h-0.9z" fill="#666"/>
<path d="M363.7 205.20000000000002h-0.7v5.4h0.7M371.7 205.20000000000002h0.7v5.4h-0.7" stroke="#555" stroke-width="0.45" fill="none"/>
<path d="M364.20 205.9h1.0v1.3h-1.0zM365.55 205.9h1.0v1.3h-1.0zM366.90 205.9h0.6v1.3h-0.6zM367.85 205.9h0.8v1.3h-0.8zM369.00 205.9h0.6v1.3h-0.6zM369.95 205.9h0.8v1.3h-0.8zM364.20 208.5h0.6v1.3h-0.6zM365.15 208.5h0.8v1.3h-0.8zM366.30 208.5h0.8v1.3h-0.8zM367.45 208.5h0.6v1.3h-0.6zM368.40 208.5h1.0v1.3h-1.0zM369.75 208.5h0.6v1.3h-0.6zM370.70 208.5h0.8v1.3h-0.8z" fill="#5a5a5a"/>
<path d="M377.7 207.60000000000002h1.2v1.3h-1.2zM379.3 207.60000000000002h1.2v1.3h-1.2zM380.7 207.9h0.9v0.5h-0.9z" fill="#666"/>
<path d="M382.9 205.20000000000002h-0.7v5.4h0.7M391.90000000000003 205.20000000000002h0.7v5.4h-0.7" stroke="#555" stroke-width="0.45" fill="none"/>
<path d="M383.40 205.9h0.8v1.3h-0.8zM384.55 205.9h0.8v1.3h-0.8zM385.70 205.9h0.8v1.3h-0.8zM386.85 205.9h0.8v1.3h-0.8zM388.00 205.9h0.6v1.3h-0.6zM388.95 205.9h0.8v1.3h-0.8zM390.10 205.9h0.6v1.3h-0.6zM391.05 205.9h1.0v1.3h-1.0zM383.40 208.5h0.6v1.3h-0.6zM384.35 208.5h1.0v1.3h-1.0zM385.70 208.5h0.6v1.3h-0.6zM386.65 208.5h0.8v1.3h-0.8zM387.80 208.5h0.8v1.3h-0.8zM388.95 208.5h0.6v1.3h-0.6zM389.90 208.5h1.0v1.3h-1.0z" fill="#5a5a5a"/>
<path d="M358.5 215.0h1.2v1.3h-1.2zM360.1 215.0h1.2v1.3h-1.2zM361.5 215.29999999999998h0.9v0.5h-0.9z" fill="#666"/>
<path d="M363.7 212.6h-0.7v5.4h0.7M371.7 212.6h0.7v5.4h-0.7" stroke="#555" stroke-width="0.45" fill="none"/>
<path d="M364.20 213.29999999999998h0.6v1.3h-0.6zM365.15 213.29999999999998h0.8v1.3h-0.8zM366.30 213.29999999999998h0.6v1.3h-0.6zM367.25 213.29999999999998h0.6v1.3h-0.6zM368.20 213.29999999999998h0.6v1.3h-0.6zM369.15 213.29999999999998h0.8v1.3h-0.8zM370.30 213.29999999999998h0.8v1.3h-0.8zM364.20 215.89999999999998h0.6v1.3h-0.6zM365.15 215.89999999999998h0.6v1.3h-0.6zM366.10 215.89999999999998h0.8v1.3h-0.8zM367.25 215.89999999999998h1.0v1.3h-1.0zM368.60 215.89999999999998h0.6v1.3h-0.6zM369.55 215.89999999999998h0.6v1.3h-0.6zM370.50 215.89999999999998h0.8v1.3h-0.8z" fill="#5a5a5a"/>
<path d="M377.7 215.0h1.2v1.3h-1.2zM379.3 215.0h1.2v1.3h-1.2zM380.7 215.29999999999998h0.9v0.5h-0.9z" fill="#666"/>
<path d="M382.9 212.6h-0.7v5.4h0.7M391.90000000000003 212.6h0.7v5.4h-0.7" stroke="#555" stroke-width="0.45" fill="none"/>
<path d="M383.40 213.29999999999998h0.8v1.3h-0.8zM384.55 213.29999999999998h1.0v1.3h-1.0zM385.90 213.29999999999998h0.8v1.3h-0.8zM387.05 213.29999999999998h1.0v1.3h-1.0zM388.40 213.29999999999998h0.8v1.3h-0.8zM389.55 213.29999999999998h0.6v1.3h-0.6zM390.50 213.29999999999998h0.8v1.3h-0.8zM383.40 215.89999999999998h0.8v1.3h-0.8zM384.55 215.89999999999998h0.6v1.3h-0.6zM385.50 215.89999999999998h0.8v1.3h-0.8zM386.65 215.89999999999998h0.6v1.3h-0.6zM387.60 215.89999999999998h1.0v1.3h-1.0zM388.95 215.89999999999998h0.8v1.3h-0.8zM390.10 215.89999999999998h0.6v1.3h-0.6zM391.05 215.89999999999998h0.8v1.3h-0.8z" fill="#5a5a5a"/>
<path d="M358.5 222.40000000000003h1.2v1.3h-1.2zM360.1 222.40000000000003h1.2v1.3h-1.2zM361.5 222.70000000000002h0.9v0.5h-0.9z" fill="#666"/>
<path d="M363.7 220.00000000000003h-0.7v5.4h0.7M371.7 220.00000000000003h0.7v5.4h-0.7" stroke="#555" stroke-width="0.45" fill="none"/>
<path d="M364.20 220.70000000000002h0.8v1.3h-0.8zM365.35 220.70000000000002h0.6v1.3h-0.6zM366.30 220.70000000000002h1.0v1.3h-1.0zM367.65 220.70000000000002h0.6v1.3h-0.6zM368.60 220.70000000000002h1.0v1.3h-1.0zM369.95 220.70000000000002h1.0v1.3h-1.0zM364.20 223.3h0.6v1.3h-0.6zM365.15 223.3h0.6v1.3h-0.6zM366.10 223.3h0.6v1.3h-0.6zM367.05 223.3h1.0v1.3h-1.0zM368.40 223.3h1.0v1.3h-1.0zM369.75 223.3h1.0v1.3h-1.0z" fill="#5a5a5a"/>
<path d="M377.7 222.40000000000003h1.2v1.3h-1.2zM379.3 222.40000000000003h1.2v1.3h-1.2zM380.7 222.70000000000002h0.9v0.5h-0.9z" fill="#666"/>
<path d="M382.9 220.00000000000003h-0.7v5.4h0.7M391.90000000000003 220.00000000000003h0.7v5.4h-0.7" stroke="#555" stroke-width="0.45" fill="none"/>
<path d="M383.40 220.70000000000002h1.0v1.3h-1.0zM384.75 220.70000000000002h0.6v1.3h-0.6zM385.70 220.70000000000002h0.8v1.3h-0.8zM386.85 220.70000000000002h0.6v1.3h-0.6zM387.80 220.70000000000002h0.6v1.3h-0.6zM388.75 220.70000000000002h1.0v1.3h-1.0zM390.10 220.70000000000002h0.6v1.3h-0.6zM391.05 220.70000000000002h0.6v1.3h-0.6zM383.40 223.3h0.8v1.3h-0.8zM384.55 223.3h1.0v1.3h-1.0zM385.90 223.3h1.0v1.3h-1.0zM387.25 223.3h0.8v1.3h-0.8zM388.40 223.3h0.6v1.3h-0.6zM389.35 223.3h0.6v1.3h-0.6zM390.30 223.3h1.0v1.3h-1.0z" fill="#5a5a5a"/>
<path d="M358.5 229.8h1.2v1.3h-1.2zM360.1 229.8h1.2v1.3h-1.2zM361.5 230.1h0.9v0.5h-0.9z" fill="#666"/>
<path d="M363.7 227.4h-0.7v5.4h0.7M371.7 227.4h0.7v5.4h-0.7" stroke="#555" stroke-width="0.45" fill="none"/>
<path d="M364.20 228.1h0.8v1.3h-0.8zM365.35 228.1h1.0v1.3h-1.0zM366.70 228.1h1.0v1.3h-1.0zM368.05 228.1h1.0v1.3h-1.0zM369.40 228.1h0.6v1.3h-0.6zM370.35 228.1h1.0v1.3h-1.0zM364.20 230.7h0.8v1.3h-0.8zM365.35 230.7h0.6v1.3h-0.6zM366.30 230.7h0.6v1.3h-0.6zM367.25 230.7h0.6v1.3h-0.6zM368.20 230.7h0.8v1.3h-0.8zM369.35 230.7h0.8v1.3h-0.8zM370.50 230.7h0.8v1.3h-0.8z" fill="#5a5a5a"/>
<path d="M377.7 229.8h1.2v1.3h-1.2zM379.3 229.8h1.2v1.3h-1.2zM380.7 230.1h0.9v0.5h-0.9z" fill="#666"/>
<path d="M382.9 227.4h-0.7v5.4h0.7M391.90000000000003 227.4h0.7v5.4h-0.7" stroke="#555" stroke-width="0.45" fill="none"/>
<path d="M383.40 228.1h0.8v1.3h-0.8zM384.55 228.1h0.6v1.3h-0.6zM385.50 228.1h0.6v1.3h-0.6zM386.45 228.1h0.6v1.3h-0.6zM387.40 228.1h0.8v1.3h-0.8zM388.55 228.1h0.8v1.3h-0.8zM389.70 228.1h0.6v1.3h-0.6zM390.65 228.1h1.0v1.3h-1.0zM383.40 230.7h0.8v1.3h-0.8zM384.55 230.7h0.6v1.3h-0.6zM385.50 230.7h0.8v1.3h-0.8zM386.65 230.7h1.0v1.3h-1.0zM388.00 230.7h0.6v1.3h-0.6zM388.95 230.7h0.8v1.3h-0.8zM390.10 230.7h1.0v1.3h-1.0z" fill="#5a5a5a"/>
<rect x="400" y="112" width="250" height="141" fill="#ffffff"/>
<defs><linearGradient id="estrip" x1="0" x2="1"><stop offset="0" stop-color="#c6d3df"/><stop offset="0.5" stop-color="#dde4ea"/><stop offset="0.8" stop-color="#f2f4f6"/><stop offset="1" stop-color="#f6f7f8"/></linearGradient></defs>
<rect x="400" y="112" width="250" height="4" fill="url(#estrip)"/>
<rect x="401.5" y="113.4" width="7" height="0.9" fill="#6a7886"/><rect x="412" y="113.4" width="6" height="0.9" fill="#6a7886"/>
<rect x="400" y="116.2" width="18" height="6.6" fill="#1c72c4"/>
<rect x="401.5" y="118.5" width="1.5" height="1.5" fill="#e0ecf8"/><rect x="404" y="119" width="6" height="0.8" fill="#a8c8ea"/><rect x="411" y="119" width="1" height="0.8" fill="#a8c8ea"/><rect x="413.5" y="119" width="3" height="0.8" fill="#a8c8ea"/>
<rect x="420" y="118.6" width="1" height="1.2" fill="#777"/><rect x="422.5" y="118.4" width="1" height="1.5" fill="#777"/><rect x="424.5" y="119" width="4" height="0.7" fill="#bbb"/>
<path d="M460.5 94.8l0.8-1.2 0.8 1.2" stroke="#888" stroke-width="0.4" fill="none"/>
<rect x="470" y="118.3" width="1.4" height="1.8" fill="#888"/>
<rect x="477" y="118.3" width="1.4" height="1.8" fill="#888"/>
<rect x="483" y="118.3" width="1.4" height="1.8" fill="#888"/>
<rect x="490" y="118.3" width="1.4" height="1.8" fill="#888"/>
<rect x="496" y="118.3" width="1.4" height="1.8" fill="#888"/>
<rect x="602" y="119" width="1.2" height="1.2" fill="#888"/><rect x="604.5" y="119.2" width="14" height="0.8" fill="#b0b0b0"/><rect x="624.5" y="118.8" width="1.5" height="1.5" fill="#555"/><rect x="627" y="119.2" width="8" height="0.8" fill="#b0b0b0"/><rect x="639.5" y="118.2" width="1" height="2.5" fill="#999"/><rect x="647" y="119.2" width="1" height="0.8" fill="#aaa"/>
<path d="M634 114.4h1.6M640.5 113.7h1.4v1.4h-1.4zM646.3 113.6l1.4 1.4M647.7 113.6l-1.4 1.4" stroke="#555" stroke-width="0.45" fill="none"/>
<rect x="400" y="247.5" width="250" height="5.2" fill="#1b2a3a"/>
<rect x="444.5" y="247.6" width="6.5" height="5.2" fill="#3a4f66"/>
<rect x="402.5" y="249.2" width="2" height="2.2" fill="#e8e8e8"/>
<rect x="408" y="249.2" width="2" height="2.2" fill="#8a9098"/>
<rect x="414.6" y="249.2" width="3.2" height="2.2" fill="#b8b49a"/>
<rect x="421" y="249.2" width="2.4" height="2.2" fill="#4a90c8"/>
<rect x="428.6" y="249.2" width="2" height="2.2" fill="#8aa090"/>
<rect x="434.4" y="249.2" width="3.2" height="2.2" fill="#f0f0f0"/>
<rect x="440.5" y="249.2" width="3.5" height="2.2" fill="#4a78c0"/>
<rect x="446" y="249.2" width="4" height="2.2" fill="#6a98d8"/>
<rect x="615" y="249.2" width="12" height="1.2" fill="#8895a0"/><rect x="634" y="248.5" width="6" height="1" fill="#aab"/><rect x="634" y="250.5" width="7" height="1" fill="#aab"/><rect x="645" y="248.7" width="2.5" height="2.5" fill="#dde"/>
<path d="M644 244.5l1.5-1.5" stroke="#444" stroke-width="0.6"/>
<text x="405.4" y="157" font-family="Liberation Sans" font-size="2.6" fill="#444">u=</text>
<path d="M410.09999999999997 153.4h-0.7v5.4h0.7M418.7 153.4h0.7v5.4h-0.7" stroke="#444" stroke-width="0.45" fill="none"/>
<rect x="413.59999999999997" y="154" width="1.6" height="1.1" fill="#666"/>
<rect x="410.9" y="156.4" width="7.0" height="1.1" fill="#8a8a8a"/>
<path d="M410.4 155.6H418.4" stroke="#888" stroke-width="0.3"/>
<text x="425" y="157" font-family="Liberation Sans" font-size="2.6" fill="#444">u=</text>
<path d="M429.7 153.4h-0.7v5.4h0.7M438.3 153.4h0.7v5.4h-0.7" stroke="#444" stroke-width="0.45" fill="none"/>
<rect x="433.2" y="154" width="1.6" height="1.1" fill="#666"/>
<rect x="430.5" y="156.4" width="7" height="1.1" fill="#8a8a8a"/>
<path d="M430 155.6H438" stroke="#888" stroke-width="0.3"/>
<text x="405.4" y="164.6" font-family="Liberation Sans" font-size="2.6" fill="#444">u=</text>
<path d="M410.09999999999997 161.0h-0.7v5.4h0.7M418.7 161.0h0.7v5.4h-0.7" stroke="#444" stroke-width="0.45" fill="none"/>
<rect x="413.59999999999997" y="161.6" width="1.6" height="1.1" fill="#666"/>
<rect x="410.9" y="164.0" width="7.0" height="1.1" fill="#8a8a8a"/>
<path d="M410.4 163.2H418.4" stroke="#888" stroke-width="0.3"/>
<text x="425" y="164.6" font-family="Liberation Sans" font-size="2.6" fill="#444">u=</text>
<path d="M429.7 161.0h-0.7v5.4h0.7M438.3 161.0h0.7v5.4h-0.7" stroke="#444" stroke-width="0.45" fill="none"/>
<rect x="433.2" y="161.6" width="1.6" height="1.1" fill="#666"/>
<rect x="430.5" y="164.0" width="7" height="1.1" fill="#8a8a8a"/>
<path d="M430 163.2H438" stroke="#888" stroke-width="0.3"/>
<text x="405.4" y="171.8" font-family="Liberation Sans" font-size="2.6" fill="#444">u=</text>
<path d="M410.09999999999997 168.20000000000002h-0.7v5.4h0.7M418.7 168.20000000000002h0.7v5.4h-0.7" stroke="#444" stroke-width="0.45" fill="none"/>
<rect x="413.59999999999997" y="168.8" width="1.6" height="1.1" fill="#666"/>
<rect x="410.9" y="171.20000000000002" width="7.0" height="1.1" fill="#8a8a8a"/>
<path d="M410.4 170.4H418.4" stroke="#888" stroke-width="0.3"/>
<text x="425" y="171.8" font-family="Liberation Sans" font-size="2.6" fill="#444">u=</text>
<path d="M429.7 168.20000000000002h-0.7v5.4h0.7M438.3 168.20000000000002h0.7v5.4h-0.7" stroke="#444" stroke-width="0.45" fill="none"/>
<rect x="433.2" y="168.8" width="1.6" height="1.1" fill="#666"/>
<rect x="430.5" y="171.20000000000002" width="7" height="1.1" fill="#8a8a8a"/>
<path d="M430 170.4H438" stroke="#888" stroke-width="0.3"/>
<text x="405.4" y="178.8" font-family="Liberation Sans" font-size="2.6" fill="#444">u=</text>
<path d="M410.09999999999997 175.20000000000002h-0.7v5.4h0.7M418.7 175.20000000000002h0.7v5.4h-0.7" stroke="#444" stroke-width="0.45" fill="none"/>
<rect x="413.59999999999997" y="175.8" width="1.6" height="1.1" fill="#666"/>
<rect x="410.9" y="178.20000000000002" width="7.0" height="1.1" fill="#8a8a8a"/>
<path d="M410.4 177.4H418.4" stroke="#888" stroke-width="0.3"/>
<text x="425" y="178.8" font-family="Liberation Sans" font-size="2.6" fill="#444">u=</text>
<path d="M429.7 175.20000000000002h-0.7v5.4h0.7M438.3 175.20000000000002h0.7v5.4h-0.7" stroke="#444" stroke-width="0.45" fill="none"/>
<rect x="433.2" y="175.8" width="1.6" height="1.1" fill="#666"/>
<rect x="430.5" y="178.20000000000002" width="7" height="1.1" fill="#8a8a8a"/>
<path d="M430 177.4H438" stroke="#888" stroke-width="0.3"/>
<text x="405.4" y="186.6" font-family="Liberation Sans" font-size="2.6" fill="#444">u=</text>
<path d="M410.09999999999997 183.0h-0.7v5.4h0.7M418.7 183.0h0.7v5.4h-0.7" stroke="#444" stroke-width="0.45" fill="none"/>
<rect x="413.59999999999997" y="183.6" width="1.6" height="1.1" fill="#666"/>
<rect x="410.9" y="186.0" width="7.0" height="1.1" fill="#8a8a8a"/>
<path d="M410.4 185.2H418.4" stroke="#888" stroke-width="0.3"/>
<text x="425" y="186.6" font-family="Liberation Sans" font-size="2.6" fill="#444">u=</text>
<path d="M429.7 183.0h-0.7v5.4h0.7M438.3 183.0h0.7v5.4h-0.7" stroke="#444" stroke-width="0.45" fill="none"/>
<rect x="433.2" y="183.6" width="1.6" height="1.1" fill="#666"/>
<rect x="430.5" y="186.0" width="7" height="1.1" fill="#8a8a8a"/>
<path d="M430 185.2H438" stroke="#888" stroke-width="0.3"/>
<path d="M360.5 245.6h2.5v-1.8h-1.5zM363.5 243.89999999999998h0.8v0.8h-0.8z" fill="#3a3a3a"/><path d="M360.5 246.7h7.5" stroke="#b8bccc" stroke-width="0.8"/>
<path d="M360.5 249.6h2.5v-1.8h-1.5zM363.5 247.89999999999998h0.8v0.8h-0.8z" fill="#3a3a3a"/><path d="M360.5 250.7h7.5" stroke="#c0ccd8" stroke-width="0.8"/>
<path d="M360.5 254.20000000000002h2.5v-1.8h-1.5zM363.5 252.5h0.8v0.8h-0.8z" fill="#3a3a3a"/><path d="M360.5 255.3h7.5" stroke="#e07070" stroke-width="0.8"/>
<path d="M360.5 258.09999999999997h2.5v-1.8h-1.5zM363.5 256.4h0.8v0.8h-0.8z" fill="#3a3a3a"/><path d="M360.5 259.2h7.5" stroke="#f0d0b0" stroke-width="0.8"/>
<path d="M360.5 262.7h2.5v-1.8h-1.5zM363.5 261.0h0.8v0.8h-0.8z" fill="#3a3a3a"/><path d="M360.5 263.8h7.5" stroke="#7ab07a" stroke-width="0.8"/>
<rect x="465.2" y="123.2" width="119.8" height="119.4" fill="#fff" stroke="#505050" stroke-width="0.7"/>
<text x="467.5" y="128.6" font-family="Liberation Serif" font-size="5" fill="#333">11.</text>
<path d="M493.6 153.4V144H499.8" stroke="#5a5a5a" stroke-width="0.5" fill="none"/>
<path d="M513.6 143.6H539.7" stroke="#5a5a5a" stroke-width="0.5" fill="none"/>
<path d="M553.5 143.9H557V151.5" stroke="#5a5a5a" stroke-width="0.5" fill="none"/>
<path d="M557 161.9V174.6" stroke="#5a5a5a" stroke-width="0.5" fill="none"/>
<path d="M557 176.5V187.8" stroke="#5a5a5a" stroke-width="0.5" fill="none"/>
<path d="M557 198.2V212.7H528.8" stroke="#5a5a5a" stroke-width="0.5" fill="none"/>
<path d="M528.8 143.6V147.2" stroke="#5a5a5a" stroke-width="0.5" fill="none"/>
<path d="M528.8 160.5V171" stroke="#5a5a5a" stroke-width="0.5" fill="none"/>
<path d="M528.8 181.5V198.8" stroke="#5a5a5a" stroke-width="0.5" fill="none"/>
<path d="M528.8 201V212.7" stroke="#5a5a5a" stroke-width="0.5" fill="none"/>
<path d="M528.8 212.7H514.2" stroke="#5a5a5a" stroke-width="0.5" fill="none"/>
<path d="M504.2 212.7H493.6V209" stroke="#5a5a5a" stroke-width="0.5" fill="none"/>
<path d="M493.6 198.2V195.4" stroke="#5a5a5a" stroke-width="0.5" fill="none"/>
<path d="M493.6 185V181.4" stroke="#5a5a5a" stroke-width="0.5" fill="none"/>
<path d="M493.6 179.2V170" stroke="#5a5a5a" stroke-width="0.5" fill="none"/>
<path d="M486 153.4H501" stroke="#5a5a5a" stroke-width="0.5" fill="none"/>
<path d="M486 153.4V157" stroke="#5a5a5a" stroke-width="0.5" fill="none"/>
<path d="M486 167V170H501" stroke="#5a5a5a" stroke-width="0.5" fill="none"/>
<path d="M501 153.4V158" stroke="#5a5a5a" stroke-width="0.5" fill="none"/>
<path d="M501 160V163" stroke="#5a5a5a" stroke-width="0.5" fill="none"/>
<path d="M501 173V170" stroke="#5a5a5a" stroke-width="0.5" fill="none"/>
<path d="M496.7 145V149H509.6V207.5" stroke="#5a5a5a" stroke-width="0.5" fill="none"/>
<path d="M514 214.5l1.5 1V222H507.5V218" stroke="#5a5a5a" stroke-width="0.5" fill="none"/>
<path d="M499.8 143.8 a1.7250000000000014 1.8975000000000017 0 0 1 3.450000000000003 0 a1.7250000000000014 1.8975000000000017 0 0 1 3.450000000000003 0 a1.7250000000000014 1.8975000000000017 0 0 1 3.450000000000003 0 a1.7250000000000014 1.8975000000000017 0 0 1 3.450000000000003 0" stroke="#3e3e3e" stroke-width="0.6" fill="none"/>
<path d="M539.7 143.8 a1.7249999999999943 1.897499999999994 0 0 1 3.4499999999999886 0 a1.7249999999999943 1.897499999999994 0 0 1 3.4499999999999886 0 a1.7249999999999943 1.897499999999994 0 0 1 3.4499999999999886 0 a1.7249999999999943 1.897499999999994 0 0 1 3.4499999999999886 0" stroke="#3e3e3e" stroke-width="0.6" fill="none"/>
<path d="M528.8 147.2 a1.8287500000000017 1.6625000000000014 0 0 1 0 3.325000000000003 a1.8287500000000017 1.6625000000000014 0 0 1 0 3.325000000000003 a1.8287500000000017 1.6625000000000014 0 0 1 0 3.325000000000003 a1.8287500000000017 1.6625000000000014 0 0 1 0 3.325000000000003" stroke="#3e3e3e" stroke-width="0.6" fill="none"/>
<path d="M516 141.5 C520 134 536 134 540 141.5" stroke="#3e3e3e" stroke-width="0.55" fill="none"/>
<path d="M514 147.5 C513 156 518 160 524 160" stroke="#3e3e3e" stroke-width="0.55" fill="none"/>
<rect x="554.9" y="151.5" width="4.2" height="10.400000000000006" fill="#fff" stroke="#3e3e3e" stroke-width="0.6"/>
<rect x="551.5" y="174.2" width="11" height="2.6" fill="#fff"/>
<path d="M552.0 174.4h10M552.0 176.6h10" stroke="#333" stroke-width="0.9"/>
<circle cx="557" cy="193" r="5.2" fill="#fff" stroke="#3e3e3e" stroke-width="0.6"/>
<path d="M557 198.2V187.8" stroke="#3e3e3e" stroke-width="0.6"/><path d="M555.8 192l1.2-2.6 1.2 2.6z" fill="#333"/>
<rect x="526.6999999999999" y="171" width="4.2" height="10.5" fill="#fff" stroke="#3e3e3e" stroke-width="0.6"/>
<rect x="523.3" y="198.6" width="11" height="2.6" fill="#fff"/>
<path d="M523.8 198.8h10M523.8 201.0h10" stroke="#333" stroke-width="0.9"/>
<rect x="483.9" y="157" width="4.2" height="10" fill="#fff" stroke="#3e3e3e" stroke-width="0.6"/>
<rect x="495.5" y="157.7" width="11" height="2.6" fill="#fff"/>
<path d="M496.0 157.9h10M496.0 160.1h10" stroke="#333" stroke-width="0.9"/>
<rect x="498.9" y="163" width="4.2" height="10" fill="#fff" stroke="#3e3e3e" stroke-width="0.6"/>
<rect x="487.5" y="179.0" width="13" height="2.6" fill="#fff"/>
<path d="M488.0 179.20000000000002h12M488.0 181.4h12" stroke="#333" stroke-width="0.9"/>
<rect x="491.5" y="185" width="4.2" height="10.400000000000006" fill="#fff" stroke="#3e3e3e" stroke-width="0.6"/>
<circle cx="493.6" cy="203.5" r="5.2" fill="#fff" stroke="#3e3e3e" stroke-width="0.6"/>
<path d="M493.6 208.7V198.3" stroke="#3e3e3e" stroke-width="0.6"/><path d="M492.40000000000003 202.5l1.2-2.6 1.2 2.6z" fill="#333"/>
<circle cx="509.2" cy="212.7" r="5" fill="#fff" stroke="#3e3e3e" stroke-width="0.6"/>
<text x="506.6" y="214.7" font-family="Liberation Serif" font-style="italic" font-size="6.6" fill="#333">W</text>
<circle cx="493.6" cy="144" r="0.6" fill="#333"/>
<circle cx="528.8" cy="143.6" r="0.6" fill="#333"/>
<circle cx="493.6" cy="153.4" r="0.6" fill="#333"/>
<circle cx="528.8" cy="212.7" r="0.6" fill="#333"/>
<circle cx="514" cy="210" r="0.6" fill="#333"/>
<circle cx="540" cy="141" r="0.6" fill="#333"/>
<text x="505" y="139" font-family="Liberation Serif" font-style="italic" font-size="6.6" fill="#333">L</text>
<text x="509" y="140.4" font-family="Liberation Serif" font-size="3.8" fill="#333">1</text>
<text x="524" y="135" font-family="Liberation Serif" font-style="italic" font-size="6.6" fill="#333">M</text>
<text x="528" y="136.4" font-family="Liberation Serif" font-size="3.8" fill="#333">12</text>
<text x="546" y="139" font-family="Liberation Serif" font-style="italic" font-size="6.6" fill="#333">L</text>
<text x="550" y="140.4" font-family="Liberation Serif" font-size="3.8" fill="#333">2</text>
<text x="519" y="154" font-family="Liberation Serif" font-style="italic" font-size="6.6" fill="#333">M</text>
<text x="523" y="155.4" font-family="Liberation Serif" font-size="3.8" fill="#333">23</text>
<text x="533" y="156" font-family="Liberation Serif" font-style="italic" font-size="6.6" fill="#333">L</text>
<text x="537" y="157.4" font-family="Liberation Serif" font-size="3.8" fill="#333">3</text>
<text x="563" y="158.5" font-family="Liberation Serif" font-style="italic" font-size="6.6" fill="#333">R</text>
<text x="567" y="159.9" font-family="Liberation Serif" font-size="3.8" fill="#333">2</text>
<text x="566" y="177.5" font-family="Liberation Serif" font-style="italic" font-size="6.6" fill="#333">C</text>
<text x="570" y="178.9" font-family="Liberation Serif" font-size="3.8" fill="#333">2</text>
<text x="566" y="197.5" font-family="Liberation Serif" font-style="italic" font-size="6.6" fill="#333">E</text>
<text x="570" y="198.9" font-family="Liberation Serif" font-size="3.8" fill="#333">2</text>
<text x="534" y="178.5" font-family="Liberation Serif" font-style="italic" font-size="6.6" fill="#333">R</text>
<text x="538" y="179.9" font-family="Liberation Serif" font-size="3.8" fill="#333">3</text>
<text x="537" y="202.5" font-family="Liberation Serif" font-style="italic" font-size="6.6" fill="#333">C</text>
<text x="541" y="203.9" font-family="Liberation Serif" font-size="3.8" fill="#333">3</text>
<text x="476" y="164.5" font-family="Liberation Serif" font-style="italic" font-size="6.6" fill="#333">R</text>
<text x="480" y="165.9" font-family="Liberation Serif" font-size="3.8" fill="#333">1'</text>
<text x="489" y="158.5" font-family="Liberation Serif" font-style="italic" font-size="6.6" fill="#333">C</text>
<text x="493" y="159.9" font-family="Liberation Serif" font-size="3.8" fill="#333">1'</text>
<text x="492" y="170.5" font-family="Liberation Serif" font-style="italic" font-size="6.6" fill="#333">R</text>
<text x="496" y="171.9" font-family="Liberation Serif" font-size="3.8" fill="#333">1''</text>
<text x="482" y="182.5" font-family="Liberation Serif" font-style="italic" font-size="6.6" fill="#333">C</text>
<text x="486" y="183.9" font-family="Liberation Serif" font-size="3.8" fill="#333">1</text>
<text x="484" y="192" font-family="Liberation Serif" font-style="italic" font-size="6.6" fill="#333">R</text>
<text x="488" y="193.4" font-family="Liberation Serif" font-size="3.8" fill="#333">1</text>
<text x="481" y="206" font-family="Liberation Serif" font-style="italic" font-size="6.6" fill="#333">E</text>
<text x="485" y="207.4" font-family="Liberation Serif" font-size="3.8" fill="#333">1</text>
<rect x="363.4" y="265.2" width="90.5" height="71.8" fill="#ffffff"/>
<path d="M365 300.6H451" stroke="#e4b8b8" stroke-width="0.5" stroke-dasharray="0.8 1.2"/>
<rect x="378.0" y="302" width="1.6" height="0.8" fill="#aaa"/>
<rect x="386.7" y="302" width="1.6" height="0.8" fill="#aaa"/>
<rect x="395.4" y="302" width="1.6" height="0.8" fill="#aaa"/>
<rect x="404.1" y="302" width="1.6" height="0.8" fill="#aaa"/>
<rect x="412.8" y="302" width="1.6" height="0.8" fill="#aaa"/>
<rect x="421.5" y="302" width="1.6" height="0.8" fill="#aaa"/>
<rect x="430.2" y="302" width="1.6" height="0.8" fill="#aaa"/>
<rect x="438.9" y="302" width="1.6" height="0.8" fill="#aaa"/>
<rect x="447.6" y="302" width="1.6" height="0.8" fill="#aaa"/>
<rect x="368" y="270" width="1.6" height="0.8" fill="#aaa"/>
<rect x="368" y="276" width="1.6" height="0.8" fill="#aaa"/>
<rect x="368" y="282" width="1.6" height="0.8" fill="#aaa"/>
<rect x="368" y="288" width="1.6" height="0.8" fill="#aaa"/>
<rect x="368" y="294" width="1.6" height="0.8" fill="#aaa"/>
<rect x="368" y="307" width="1.6" height="0.8" fill="#aaa"/>
<rect x="368" y="313" width="1.6" height="0.8" fill="#aaa"/>
<rect x="368" y="319" width="1.6" height="0.8" fill="#aaa"/>
<rect x="368" y="325" width="1.6" height="0.8" fill="#aaa"/>
<rect x="368" y="331" width="1.6" height="0.8" fill="#aaa"/>
<path d="M370.9 300.6V270" stroke="#e0d8d0" stroke-width="0.4"/>
<path d="M370.9 300.6L378.9 272.6" stroke="#3a4a7c" stroke-width="0.8"/>
<path d="M370.9 300.6L442.7 296.9" stroke="#d84a4a" stroke-width="1.0"/>
<path d="M370.9 300.6L378 298.8" stroke="#f0a060" stroke-width="1.3"/>
<path d="M370.9 300.6L435.2 326.2" stroke="#333" stroke-width="0.9"/>
<path d="M456 306.5h2.6v-1.6h-1.6zM458.9 304.9h0.8v0.8h-0.8z" fill="#505050"/><path d="M456 307.5h8" stroke="#2a3a7a" stroke-width="0.9"/>
<path d="M456 311.1h2.6v-1.6h-1.6zM458.9 309.5h0.8v0.8h-0.8z" fill="#505050"/><path d="M456 312.1h8" stroke="#c8c8c8" stroke-width="0.9"/>
<path d="M456 315.1h2.6v-1.6h-1.6zM458.9 313.5h0.8v0.8h-0.8z" fill="#505050"/><path d="M456 316.1h8" stroke="#f0e0c0" stroke-width="0.9"/>
<path d="M456 319.1h2.6v-1.6h-1.6zM458.9 317.5h0.8v0.8h-0.8z" fill="#505050"/><path d="M456 320.1h8" stroke="#f4eaea" stroke-width="0.9"/>
<path d="M456 324.2h2.6v-1.6h-1.6zM458.9 322.59999999999997h0.8v0.8h-0.8z" fill="#505050"/><path d="M456 325.2h8" stroke="#4a9a5a" stroke-width="0.9"/>
<rect x="483.5" y="262.6" width="114.7" height="75.9" fill="#ffffff"/>
<path d="M488 286.3H592" stroke="#d8c0c0" stroke-width="0.5" stroke-dasharray="0.8 1.2"/>
<rect x="490.0" y="286" width="1.4" height="0.8" fill="#999"/>
<rect x="500.2" y="286" width="1.4" height="0.8" fill="#999"/>
<rect x="510.4" y="286" width="1.4" height="0.8" fill="#999"/>
<rect x="520.6" y="286" width="1.4" height="0.8" fill="#999"/>
<rect x="530.8" y="286" width="1.4" height="0.8" fill="#999"/>
<rect x="541.0" y="286" width="1.4" height="0.8" fill="#999"/>
<rect x="551.2" y="286" width="1.4" height="0.8" fill="#999"/>
<rect x="561.4" y="286" width="1.4" height="0.8" fill="#999"/>
<rect x="571.6" y="286" width="1.4" height="0.8" fill="#999"/>
<rect x="581.8" y="286" width="1.4" height="0.8" fill="#999"/>
<rect x="501" y="269" width="1.6" height="0.8" fill="#999"/>
<rect x="501" y="275" width="1.6" height="0.8" fill="#999"/>
<rect x="501" y="281" width="1.6" height="0.8" fill="#999"/>
<rect x="501" y="292" width="1.6" height="0.8" fill="#999"/>
<rect x="501" y="298" width="1.6" height="0.8" fill="#999"/>
<rect x="501" y="304" width="1.6" height="0.8" fill="#999"/>
<rect x="501" y="310" width="1.6" height="0.8" fill="#999"/>
<rect x="501" y="316" width="1.6" height="0.8" fill="#999"/>
<rect x="501" y="322" width="1.6" height="0.8" fill="#999"/>
<rect x="501" y="328" width="1.6" height="0.8" fill="#999"/>
<rect x="501" y="333" width="1.6" height="0.8" fill="#999"/>
<path d="M502.4 286.3L507.2 323.4" stroke="#e05a6a" stroke-width="0.7"/>
<path d="M507.2 323.4H520.6V304" stroke="#f0e070" stroke-width="0.9" fill="none"/>
<path d="M498.7 302L539.2 296.9" stroke="#4a9a5a" stroke-width="0.9"/>
<path d="M498.7 302L519 304.7" stroke="#2a7a3a" stroke-width="1.1"/>
<path d="M498.7 302.4H539.2" stroke="#333" stroke-width="0.8"/>
<path d="M539.2 296.9L561.1 299.7" stroke="#e06070" stroke-width="0.7"/>
<path d="M561 297L570 289" stroke="#f8f5d8" stroke-width="3"/>
<path d="M502.4 286.3L539.2 327.6L583.9 278.3" stroke="#2e2e4e" stroke-width="0.9" fill="none"/>
<path d="M547.6 272.4L583.9 278.3" stroke="#e05a6a" stroke-width="0.8"/>
<path d="M474 279.5h2.6v-1.6h-1.6zM476.9 277.9h0.8v0.8h-0.8z" fill="#4a4a4a"/><path d="M474 280.5h6" stroke="#667" stroke-width="0.7"/>
<path d="M474 283.7h2.6v-1.6h-1.6zM476.9 282.09999999999997h0.8v0.8h-0.8z" fill="#4a4a4a"/><path d="M474 284.7h6" stroke="#889" stroke-width="0.7"/>
<path d="M474 287.9h2.6v-1.6h-1.6zM476.9 286.29999999999995h0.8v0.8h-0.8z" fill="#4a4a4a"/><path d="M474 288.9h6" stroke="#f0b0b0" stroke-width="0.7"/>
<path d="M474 292.1h2.6v-1.6h-1.6zM476.9 290.5h0.8v0.8h-0.8z" fill="#4a4a4a"/><path d="M474 293.1h6" stroke="#f0c0c0" stroke-width="0.7"/>
<path d="M474 296.3h2.6v-1.6h-1.6zM476.9 294.7h0.8v0.8h-0.8z" fill="#4a4a4a"/><path d="M474 297.3h6" stroke="#eee" stroke-width="0.7"/>
<path d="M474 300.5h2.6v-1.6h-1.6zM476.9 298.9h0.8v0.8h-0.8z" fill="#4a4a4a"/><path d="M474 301.5h6" stroke="#f4ec90" stroke-width="0.7"/>
<path d="M474 304.7h2.6v-1.6h-1.6zM476.9 303.09999999999997h0.8v0.8h-0.8z" fill="#4a4a4a"/><path d="M474 305.7h6" stroke="#4a9a5a" stroke-width="0.7"/>
<path d="M474 308.9h2.6v-1.6h-1.6zM476.9 307.29999999999995h0.8v0.8h-0.8z" fill="#4a4a4a"/><path d="M474 309.9h6" stroke="#a0c8a8" stroke-width="0.7"/>
<path d="M474 313.1h2.6v-1.6h-1.6zM476.9 311.5h0.8v0.8h-0.8z" fill="#4a4a4a"/><path d="M474 314.1h6" stroke="#aaa" stroke-width="0.7"/>
<path d="M474 317.3h2.6v-1.6h-1.6zM476.9 315.7h0.8v0.8h-0.8z" fill="#4a4a4a"/><path d="M474 318.3h6" stroke="#e8a0a8" stroke-width="0.7"/>
<path d="M474 321.5h2.6v-1.6h-1.6zM476.9 319.9h0.8v0.8h-0.8z" fill="#4a4a4a"/><path d="M474 322.5h6" stroke="#f0e890" stroke-width="0.7"/>
<path d="M600 290.5h2.6v-1.6h-1.6zM602.9 288.9h0.8v0.8h-0.8z" fill="#4a4a4a"/><path d="M600 291.5h6" stroke="#334" stroke-width="0.7"/>
<path d="M600 294.7h2.6v-1.6h-1.6zM602.9 293.09999999999997h0.8v0.8h-0.8z" fill="#4a4a4a"/><path d="M600 295.7h6" stroke="#445" stroke-width="0.7"/>
<path d="M600 298.9h2.6v-1.6h-1.6zM602.9 297.29999999999995h0.8v0.8h-0.8z" fill="#4a4a4a"/><path d="M600 299.9h6" stroke="#e8b0b0" stroke-width="0.7"/>
<path d="M600 303.1h2.6v-1.6h-1.6zM602.9 301.5h0.8v0.8h-0.8z" fill="#4a4a4a"/><path d="M600 304.1h6" stroke="#f0c0c0" stroke-width="0.7"/>
<path d="M600 307.3h2.6v-1.6h-1.6zM602.9 305.7h0.8v0.8h-0.8z" fill="#4a4a4a"/><path d="M600 308.3h6" stroke="#ddd" stroke-width="0.7"/>
<path d="M600 311.5h2.6v-1.6h-1.6zM602.9 309.9h0.8v0.8h-0.8z" fill="#4a4a4a"/><path d="M600 312.5h6" stroke="#f0d890" stroke-width="0.7"/>
<path d="M600 315.7h2.6v-1.6h-1.6zM602.9 314.09999999999997h0.8v0.8h-0.8z" fill="#4a4a4a"/><path d="M600 316.7h6" stroke="#3a8a4a" stroke-width="0.7"/>
<path d="M600 319.9h2.6v-1.6h-1.6zM602.9 318.29999999999995h0.8v0.8h-0.8z" fill="#4a4a4a"/><path d="M600 320.9h6" stroke="#4a9a5a" stroke-width="0.7"/>
<path d="M600 324.1h2.6v-1.6h-1.6zM602.9 322.5h0.8v0.8h-0.8z" fill="#4a4a4a"/><path d="M600 325.1h6" stroke="#ccc" stroke-width="0.7"/>
<path d="M600 328.3h2.6v-1.6h-1.6zM602.9 326.7h0.8v0.8h-0.8z" fill="#4a4a4a"/><path d="M600 329.3h6" stroke="#e8b0b0" stroke-width="0.7"/>
<path d="M600 332.5h2.6v-1.6h-1.6zM602.9 330.9h0.8v0.8h-0.8z" fill="#4a4a4a"/><path d="M600 333.5h6" stroke="#f0e890" stroke-width="0.7"/>
<rect x="373" y="348.5" width="124.9" height="100.2" fill="#ffffff"/>
<path d="M378 398.6H492" stroke="#e8d0a0" stroke-width="0.5" stroke-dasharray="0.8 1.2"/>
<rect x="381" y="357" width="1.6" height="0.8" fill="#aaa"/>
<rect x="381" y="364" width="1.6" height="0.8" fill="#aaa"/>
<rect x="381" y="371" width="1.6" height="0.8" fill="#aaa"/>
<rect x="381" y="378" width="1.6" height="0.8" fill="#aaa"/>
<rect x="381" y="385" width="1.6" height="0.8" fill="#aaa"/>
<rect x="381" y="392" width="1.6" height="0.8" fill="#aaa"/>
<rect x="381" y="405" width="1.6" height="0.8" fill="#aaa"/>
<rect x="381" y="412" width="1.6" height="0.8" fill="#aaa"/>
<rect x="381" y="419" width="1.6" height="0.8" fill="#aaa"/>
<rect x="381" y="426" width="1.6" height="0.8" fill="#aaa"/>
<rect x="381" y="433" width="1.6" height="0.8" fill="#aaa"/>
<rect x="381" y="440" width="1.6" height="0.8" fill="#aaa"/>
<rect x="390" y="399.5" width="1.8" height="0.7" fill="#bbb"/>
<rect x="400" y="399.5" width="1.8" height="0.7" fill="#bbb"/>
<rect x="410" y="399.5" width="1.8" height="0.7" fill="#bbb"/>
<rect x="420" y="399.5" width="1.8" height="0.7" fill="#bbb"/>
<rect x="430" y="399.5" width="1.8" height="0.7" fill="#bbb"/>
<rect x="440" y="399.5" width="1.8" height="0.7" fill="#bbb"/>
<rect x="450" y="399.5" width="1.8" height="0.7" fill="#bbb"/>
<rect x="460" y="399.5" width="1.8" height="0.7" fill="#bbb"/>
<rect x="470" y="399.5" width="1.8" height="0.7" fill="#bbb"/>
<rect x="480" y="399.5" width="1.8" height="0.7" fill="#bbb"/>
<polyline points="382.3,385.5 383.3,385.5 384.3,385.6 385.3,385.8 386.3,386.1 387.3,386.5 388.3,386.9 389.3,387.5 390.3,388.2 391.3,388.9 392.3,389.8 393.3,390.7 394.3,391.6 395.3,392.7 396.3,393.7 397.3,394.8 398.3,395.9 399.3,397.1 400.3,398.3 401.3,399.4 402.3,400.6 403.3,401.7 404.3,402.8 405.3,403.9 406.3,405.0 407.3,406.0 408.3,406.9 409.3,407.7 410.3,408.5 411.3,409.2 412.3,409.8 413.3,410.4 414.3,410.8 415.3,411.1 416.3,411.3 417.3,411.5 418.3,411.5 419.3,411.4 420.3,411.2 421.3,410.9 422.3,410.5 423.3,410.1 424.3,409.5 425.3,408.8 426.3,408.1 427.3,407.2 428.3,406.3 429.3,405.4 430.3,404.3 431.3,403.3 432.3,402.2 433.3,401.1 434.3,399.9 435.3,398.7 436.3,397.6 437.3,396.4 438.3,395.3 439.3,394.2 440.3,393.1 441.3,392.0 442.3,391.0 443.3,390.1 444.3,389.3 445.3,388.5 446.3,387.8 447.3,387.2 448.3,386.6 449.3,386.2 450.3,385.9 451.3,385.7 452.3,385.5 453.3,385.5 454.3,385.6 455.3,385.8 456.3,386.1 457.3,386.5 458.3,386.9 459.3,387.5 460.3,388.2 461.3,388.9 462.3,389.8 463.3,390.7 464.3,391.6 465.3,392.7 466.3,393.7 467.3,394.8 468.3,395.9 469.3,397.1 470.3,398.3 471.3,399.4 472.3,400.6 473.3,401.7 474.3,402.8 475.3,403.9 476.3,405.0 477.3,406.0 478.3,406.9 479.3,407.7 480.3,408.5 481.3,409.2 482.3,409.8 483.3,410.4" stroke="#c8c0b0" stroke-width="0.8" fill="none"/>
<polyline points="382.3,385.6 383.3,386.2 384.3,386.8 385.3,387.6 386.3,388.4 387.3,389.3 388.3,390.3 389.3,391.4 390.3,392.5 391.3,393.6 392.3,394.9 393.3,396.1 394.3,397.3 395.3,398.6 396.3,399.9 397.3,401.2 398.3,402.4 399.3,403.6 400.3,404.8 401.3,406.0 402.3,407.1 403.3,408.1 404.3,409.0 405.3,409.9 406.3,410.7 407.3,411.4 408.3,412.1 409.3,412.6 410.3,413.0 411.3,413.3 412.3,413.5 413.3,413.6 414.3,413.6 415.3,413.4 416.3,413.2 417.3,412.8 418.3,412.4 419.3,411.8 420.3,411.2 421.3,410.4 422.3,409.6 423.3,408.7 424.3,407.7 425.3,406.6 426.3,405.5 427.3,404.4 428.3,403.1 429.3,401.9 430.3,400.7 431.3,399.4 432.3,398.1 433.3,396.8 434.3,395.6 435.3,394.4 436.3,393.2 437.3,392.0 438.3,390.9 439.3,389.9 440.3,389.0 441.3,388.1 442.3,387.3 443.3,386.6 444.3,385.9 445.3,385.4 446.3,385.0 447.3,384.7 448.3,384.5 449.3,384.4 450.3,384.4 451.3,384.6 452.3,384.8 453.3,385.2 454.3,385.6 455.3,386.2 456.3,386.8 457.3,387.6 458.3,388.4 459.3,389.3 460.3,390.3 461.3,391.4 462.3,392.5 463.3,393.6 464.3,394.9 465.3,396.1 466.3,397.3 467.3,398.6 468.3,399.9 469.3,401.2 470.3,402.4 471.3,403.6 472.3,404.8 473.3,406.0 474.3,407.1 475.3,408.1 476.3,409.0 477.3,409.9 478.3,410.7 479.3,411.4 480.3,412.1 481.3,412.6 482.3,413.0 483.3,413.3" stroke="#3a48a0" stroke-width="0.9" fill="none"/>
<polyline points="382.3,396.0 383.3,396.3 384.3,396.7 385.3,397.0 386.3,397.4 387.3,397.7 388.3,398.1 389.3,398.5 390.3,398.9 391.3,399.3 392.3,399.7 393.3,400.1 394.3,400.4 395.3,400.8 396.3,401.1 397.3,401.4 398.3,401.7 399.3,402.0 400.3,402.2 401.3,402.4 402.3,402.6 403.3,402.8 404.3,402.9 405.3,402.9 406.3,403.0 407.3,403.0 408.3,403.0 409.3,402.9 410.3,402.8 411.3,402.7 412.3,402.5 413.3,402.3 414.3,402.1 415.3,401.8 416.3,401.5 417.3,401.2 418.3,400.9 419.3,400.6 420.3,400.2 421.3,399.8 422.3,399.5 423.3,399.1 424.3,398.7 425.3,398.3 426.3,397.9 427.3,397.5 428.3,397.1 429.3,396.8 430.3,396.4 431.3,396.1 432.3,395.8 433.3,395.5 434.3,395.3 435.3,395.1 436.3,394.9 437.3,394.7 438.3,394.6 439.3,394.5 440.3,394.4 441.3,394.4 442.3,394.4 443.3,394.5 444.3,394.5 445.3,394.7 446.3,394.8 447.3,395.0 448.3,395.2 449.3,395.4 450.3,395.7 451.3,396.0 452.3,396.3 453.3,396.7 454.3,397.0 455.3,397.4 456.3,397.7 457.3,398.1 458.3,398.5 459.3,398.9 460.3,399.3 461.3,399.7 462.3,400.1 463.3,400.4 464.3,400.8 465.3,401.1 466.3,401.4 467.3,401.7 468.3,402.0 469.3,402.2 470.3,402.4 471.3,402.6 472.3,402.8 473.3,402.9 474.3,402.9 475.3,403.0 476.3,403.0 477.3,403.0 478.3,402.9 479.3,402.8 480.3,402.7 481.3,402.5 482.3,402.3 483.3,402.1" stroke="#f0e040" stroke-width="0.9" fill="none"/>
<polyline points="382.3,405.3 383.3,408.3 384.3,411.3 385.3,414.3 386.3,417.0 387.3,419.7 388.3,422.1 389.3,424.4 390.3,426.4 391.3,428.3 392.3,429.8 393.3,431.2 394.3,432.2 395.3,433.0 396.3,433.6 397.3,433.8 398.3,433.7 399.3,433.4 400.3,432.8 401.3,431.9 402.3,430.7 403.3,429.2 404.3,427.6 405.3,425.6 406.3,423.5 407.3,421.1 408.3,418.6 409.3,415.9 410.3,413.1 411.3,410.2 412.3,407.1 413.3,404.0 414.3,400.9 415.3,397.7 416.3,394.5 417.3,391.4 418.3,388.3 419.3,385.4 420.3,382.5 421.3,379.8 422.3,377.2 423.3,374.8 424.3,372.6 425.3,370.6 426.3,368.8 427.3,367.3 428.3,366.1 429.3,365.1 430.3,364.4 431.3,363.9 432.3,363.8 433.3,363.9 434.3,364.4 435.3,365.1 436.3,366.1 437.3,367.3 438.3,368.8 439.3,370.6 440.3,372.6 441.3,374.8 442.3,377.2 443.3,379.8 444.3,382.5 445.3,385.4 446.3,388.3 447.3,391.4 448.3,394.5 449.3,397.7 450.3,400.9 451.3,404.0 452.3,407.1 453.3,410.2 454.3,413.1 455.3,415.9 456.3,418.6 457.3,421.1 458.3,423.5 459.3,425.6 460.3,427.6 461.3,429.2 462.3,430.7 463.3,431.9 464.3,432.8 465.3,433.4 466.3,433.7 467.3,433.8 468.3,433.6 469.3,433.0 470.3,432.2 471.3,431.2 472.3,429.8 473.3,428.3 474.3,426.4 475.3,424.4 476.3,422.1 477.3,419.7 478.3,417.0 479.3,414.3 480.3,411.3 481.3,408.3 482.3,405.3 483.3,402.1" stroke="#222" stroke-width="1.0" fill="none"/>
<polyline points="382.3,393.9 383.3,397.3 384.3,400.8 385.3,404.3 386.3,407.7 387.3,411.0 388.3,414.2 389.3,417.3 390.3,420.2 391.3,423.0 392.3,425.5 393.3,427.9 394.3,430.0 395.3,431.8 396.3,433.3 397.3,434.6 398.3,435.5 399.3,436.1 400.3,436.5 401.3,436.5 402.3,436.1 403.3,435.5 404.3,434.6 405.3,433.3 406.3,431.8 407.3,430.0 408.3,427.9 409.3,425.5 410.3,423.0 411.3,420.2 412.3,417.3 413.3,414.2 414.3,411.0 415.3,407.7 416.3,404.3 417.3,400.8 418.3,397.3 419.3,393.9 420.3,390.5 421.3,387.1 422.3,383.9 423.3,380.8 424.3,377.8 425.3,375.1 426.3,372.5 427.3,370.1 428.3,368.0 429.3,366.2 430.3,364.6 431.3,363.3 432.3,362.4 433.3,361.7 434.3,361.4 435.3,361.3 436.3,361.6 437.3,362.2 438.3,363.1 439.3,364.3 440.3,365.9 441.3,367.6 442.3,369.7 443.3,372.0 444.3,374.5 445.3,377.3 446.3,380.2 447.3,383.3 448.3,386.5 449.3,389.8 450.3,393.2 451.3,396.6 452.3,400.1 453.3,403.6 454.3,407.0 455.3,410.3 456.3,413.6 457.3,416.7 458.3,419.7 459.3,422.5 460.3,425.1 461.3,427.4 462.3,429.6 463.3,431.4 464.3,433.0 465.3,434.3 466.3,435.3 467.3,436.0 468.3,436.4 469.3,436.5 470.3,436.2 471.3,435.7 472.3,434.8 473.3,433.6 474.3,432.1 475.3,430.3 476.3,428.3 477.3,426.0 478.3,423.5 479.3,420.8 480.3,417.9 481.3,414.8 482.3,411.6 483.3,408.3" stroke="#d04048" stroke-width="1.0" fill="none"/>
<path d="M361 390.5h2.6v-1.6h-1.6zM363.9 388.9h0.8v0.8h-0.8z" fill="#4a4a4a"/><path d="M361 391.5h8" stroke="#3a48a0" stroke-width="0.8"/>
<path d="M361 394.0h2.6v-1.6h-1.6zM363.9 392.4h0.8v0.8h-0.8z" fill="#4a4a4a"/><path d="M361 395.0h8" stroke="#2a2a3a" stroke-width="0.8"/>
<path d="M361 397.5h2.6v-1.6h-1.6zM363.9 395.9h0.8v0.8h-0.8z" fill="#4a4a4a"/><path d="M361 398.5h8" stroke="#222" stroke-width="0.8"/>
<path d="M361 401.0h2.6v-1.6h-1.6zM363.9 399.4h0.8v0.8h-0.8z" fill="#4a4a4a"/><path d="M361 402.0h8" stroke="#d04048" stroke-width="0.8"/>
<path d="M361 404.5h2.6v-1.6h-1.6zM363.9 402.9h0.8v0.8h-0.8z" fill="#4a4a4a"/><path d="M361 405.5h8" stroke="#f0e040" stroke-width="0.8"/>
<path d="M361 408.0h2.6v-1.6h-1.6zM363.9 406.4h0.8v0.8h-0.8z" fill="#4a4a4a"/><path d="M361 409.0h8" stroke="#f0e890" stroke-width="0.8"/>
<rect x="501.5" y="403.5" width="5" height="3" fill="#e0a040"/><rect x="501.5" y="403" width="5" height="1.5" fill="#333"/>
<text x="389" y="408" font-size="1" fill="#fff"> </text>
</svg>
<!--/PAGE-->
<div id="vscroll" class="a"></div>
<div id="status" class="a"></div>
<div id="taskbar" class="a"></div>
<!-- doc tabs -->
<svg class="a" style="left:0;top:79px" width="40" height="13" viewBox="0 79 40 13">
 <path d="M3.5 92V80.5H22.5L31.5 92z" fill="#f6f9fb" stroke="#c8d2dc" stroke-width="0.6"/>
</svg>
<div class="t" style="left:10px;top:82.5px;font-size:6.2px;line-height:8px;font-weight:bold;color:#2a2a2a">TP2</div>
<svg class="a" style="left:980px;top:80px" width="20" height="12" viewBox="0 0 20 12">
 <path d="M4.5 5h4l-2 2.2z" fill="#333"/>
 <path d="M13 3.3l4 4M17 3.3l-4 4" stroke="#444" stroke-width="0.8"/>
</svg>
<div class="a" style="left:0;top:91.4px;width:991px;height:1.2px;background:#55595c"></div>
<!-- vscroll -->
<div class="a" style="left:991px;top:92px;width:1px;height:431px;background:#c9d2da"></div>
<div class="a" style="left:994.5px;top:96px;width:2px;height:2px;border-radius:50%;background:#9aa4ad"></div>
<div class="a" style="left:993px;top:137.5px;width:5.5px;height:171px;border:0.7px solid #b9c4ce;border-radius:3px;background:linear-gradient(90deg,#f7f9fb,#ffffff,#eef2f5)"></div>
<div class="a" style="left:994.5px;top:517px;width:2px;height:2px;border-radius:50%;background:#9aa4ad"></div>
<!-- status bar -->
<div class="t" style="left:6.5px;top:530px;font-size:6.2px;line-height:8px;color:#4a5058">1 / 8</div>
<div class="a" style="left:24px;top:531.3px;width:5.5px;height:5.5px;border-radius:50%;background:#1a8a1a"></div>
<div class="a" style="left:43.5px;top:527px;width:1px;height:14px;background:#c6ced6"></div>
<div class="t" style="left:50px;top:530px;font-size:5.9px;line-height:8px;color:#505860">Найти:</div>
<div class="a" style="left:72px;top:529px;width:61px;height:10px;background:#fff;border:0.5px solid #d8dee4"></div>
<div class="a" style="left:139.5px;top:532px;width:4px;height:4px;border-radius:50%;background:#c6ccd2"></div>
<div class="a" style="left:152px;top:532px;width:4px;height:4px;border-radius:50%;background:#c6ccd2"></div>
<div class="t" style="left:165px;top:530px;font-size:5.95px;line-height:8px;color:#505860">Заменить на:</div>
<div class="a" style="left:205px;top:529px;width:61px;height:10px;background:#fff;border:0.5px solid #d8dee4"></div>
<div class="a" style="left:273.5px;top:532px;width:3.5px;height:3.5px;background:#c6ccd2"></div>
<div class="t" style="left:283px;top:530px;font-size:6.2px;line-height:8px;color:#454c54">Опции</div>
<div class="a" style="left:308px;top:533px;width:0;height:0;border-left:1.5px solid transparent;border-right:1.5px solid transparent;border-top:1.8px solid #555"></div>
<div class="t" style="left:869.5px;top:530px;font-size:6.4px;line-height:8px;color:#4a5058">25%</div>
<div class="a" style="left:889px;top:531.5px;width:4.5px;height:4.5px;border-radius:50%;border:0.6px solid #b8c2cc;background:#eef2f6"></div>
<div class="a" style="left:890px;top:533.5px;width:2.5px;height:0.7px;background:#667"></div>
<div class="a" style="left:902px;top:533.5px;width:49px;height:1px;background:#d0d4d8"></div><div class="a" style="left:902px;top:533.5px;width:14px;height:1px;background:#dcc0c4"></div>
<div class="a" style="left:896.5px;top:529px;width:5px;height:10px;border-radius:2px;border:0.6px solid #93a8bd;background:linear-gradient(#e6eff8,#b9cde2)"></div>
<div class="a" style="left:953.5px;top:531.5px;width:4.5px;height:4.5px;border-radius:50%;border:0.6px solid #b8c2cc;background:#eef2f6"></div>
<div class="a" style="left:955px;top:533px;width:1.6px;height:1.6px;border-radius:50%;background:#667"></div>
<div class="a" style="left:968.5px;top:530.5px;width:5.5px;height:7px;border:0.8px solid #8a929a;background:#fff"></div>
<div class="a" style="left:970px;top:532px;width:2.5px;height:4px;background:#c8ccd0"></div>
<div class="a" style="left:978.5px;top:527.5px;width:11.5px;height:12px;border:0.6px solid #c4ccd4;background:#f5f7fa"></div>
<div class="a" style="left:981.5px;top:530.5px;width:5.5px;height:6px;background:#8e8e8e"></div>
<!-- taskbar -->
<svg class="a" style="left:0;top:542px" width="1000" height="21" viewBox="0 542 1000 21">
 <g fill="#ffffff">
  <rect x="8.2" y="548.3" width="3.9" height="3.9"/><rect x="12.7" y="548" width="4.4" height="4.2"/>
  <rect x="8.2" y="552.8" width="3.9" height="3.9"/><rect x="12.7" y="552.8" width="4.4" height="4.4"/>
 </g>
 <circle cx="38.8" cy="550.7" r="2.8" fill="none" stroke="#e8ecef" stroke-width="0.9"/>
 <path d="M36.8 552.8l-3.3 3.5" stroke="#e8ecef" stroke-width="1"/>
 <rect x="58" y="548.3" width="12" height="9" fill="#f0c84a"/>
 <rect x="58" y="551.3" width="12" height="2" fill="#e0b23a"/>
 <rect x="61.5" y="554.3" width="5" height="3" fill="#4a8fcf"/>
 <circle cx="89.5" cy="552" r="5.3" fill="#1f9ae0"/>
 <text x="89.5" y="554.6" font-family="Liberation Sans" font-size="7.5" font-weight="bold" fill="#fff" text-anchor="middle">S</text>
 <circle cx="115.2" cy="552" r="5.5" fill="#db4437"/>
 <path d="M115.2 552L110.5 549.3A5.5 5.5 0 0 1 119.9 549.3z" fill="#db4437"/>
 <path d="M115.2 552L119.9 549.3A5.5 5.5 0 0 1 115.2 557.5z" fill="#f4c20d"/>
 <path d="M115.2 552L115.2 557.5A5.5 5.5 0 0 1 110.5 549.3z" fill="#3cba54"/>
 <circle cx="115.2" cy="552" r="2.5" fill="#fff"/><circle cx="115.2" cy="552" r="1.9" fill="#4285f4"/>
 <rect x="128" y="542" width="25.5" height="21" fill="#3f4d57"/>
 <rect x="135" y="546.5" width="11.5" height="11.5" fill="#fdfaf0"/>
 <text x="140.5" y="556.2" font-family="Liberation Sans" font-size="9" font-weight="bold" fill="#e8a818" text-anchor="middle">M</text>
 <rect x="159" y="547" width="12" height="10" rx="1" fill="#2b65c0"/>
 <rect x="162" y="547" width="9" height="3.3" fill="#4aa0ef"/>
 <rect x="157.5" y="550" width="6" height="6" fill="#1c4fa0"/>
 <text x="160.5" y="555.2" font-family="Liberation Sans" font-size="4.5" font-weight="bold" fill="#fff" text-anchor="middle">W</text>
 <rect x="185.5" y="547" width="11.5" height="10.5" fill="#2a7bd0"/>
 <path d="M185.5 557.5l4-5 3 3 2-2 2.5 4z" fill="#0d3f8a"/>
 <circle cx="194" cy="549.5" r="1" fill="#cfe6ff"/>
 <g fill="#8cb4d8" opacity="0.9">
  <rect x="104" y="561.5" width="22" height="1.5"/><rect x="128" y="561.5" width="25.5" height="1.5"/>
  <rect x="156" y="561.5" width="20" height="1.5"/><rect x="182" y="561.5" width="20" height="1.5"/>
 </g>
 <path d="M872.5 553.5l3-3 3 3" stroke="#e6e9ec" stroke-width="0.9" fill="none"/>
 <path d="M887.5 547.5h3v5.5c0 1.2-0.7 2-1.5 2s-1.5-0.8-1.5-2z" fill="#e6e9ec"/>
 <rect x="887" y="555.5" width="4" height="1.5" fill="#9aa0a6"/>
 <rect x="897.5" y="548.5" width="8" height="5.5" fill="none" stroke="#e6e9ec" stroke-width="0.9"/>
 <path d="M896.5 548v8M899 554v2.5" stroke="#e6e9ec" stroke-width="0.8"/>
 <path d="M909.5 550.5h1.5l2-2v8l-2-2h-1.5z" fill="none" stroke="#e6e9ec" stroke-width="0.8"/>
 <path d="M914.5 550.5c0.8 1 0.8 3 0 4M916 549.3c1.3 1.5 1.3 4.5 0 6" stroke="#e6e9ec" stroke-width="0.7" fill="none"/>
 <path d="M979 547.5h10v6.5h-5l-2.5 2.5v-2.5h-2.5z" fill="#f0f0f0"/>
 <path d="M981 549.5h6M981 551.5h6" stroke="#1b2b45" stroke-width="0.6"/>
 <circle cx="986.5" cy="556.5" r="3" fill="#1b2b45" stroke="#e6e9ec" stroke-width="0.6"/>
 <text x="986.5" y="558.2" font-family="Liberation Sans" font-size="4" fill="#fff" text-anchor="middle">2</text>
</svg>
<div class="t" style="left:922.5px;top:548.5px;font-size:5.6px;line-height:8px;color:#e8ebee">РУС</div>
<div class="t" style="left:948px;top:544px;font-size:5.7px;line-height:8px;color:#e8ebee">22:12</div>
<div class="t" style="left:940.5px;top:553px;font-size:5.9px;line-height:8px;color:#e8ebee">28.11.2020</div>
<!-- title bar -->
<div class="a" style="left:3px;top:1px;width:19px;height:19px;border-radius:50%;background:radial-gradient(circle at 50% 40%,#ffffff 0%,#eef4f8 55%,#d5dfe6 100%);border:2.2px solid #8fa1ae;z-index:5"></div>
<div class="a" style="left:7px;top:5.5px;width:11px;height:11px;z-index:6;font:bold 9px/11px 'Liberation Sans',sans-serif;color:#eeb43a;text-align:center">M</div>
<svg class="a" style="left:24px;top:1px" width="66" height="12" viewBox="0 0 66 12">
 <path d="M2.5 2.5h5l2 2v6h-7z" fill="#f4f7fa" stroke="#8f969c" stroke-width="0.8"/>
 <path d="M14.8 4.5h3l1 1h4v5h-8z" fill="#cfc886" stroke="#b9a65a" stroke-width="0.5"/>
 <path d="M14.8 10.5l1.5-4h7.5l-1.5 4z" fill="#e2de8a"/>
 <path d="M20.5 3.2l2-1 1.2 1.3" stroke="#333" stroke-width="0.7" fill="none"/>
 <rect x="28.5" y="3" width="7.5" height="7.5" fill="#666" stroke="#555" stroke-width="0.5"/>
 <rect x="30" y="3.5" width="4.5" height="2.5" fill="#ddd"/>
 <rect x="30" y="7.5" width="4.5" height="3" fill="#999"/>
 <path d="M42 4.5l-2.2 2.2 2.2 2" stroke="#222" stroke-width="1.4" fill="none"/>
 <path d="M40.5 6.7h4c2.5 0 4 1.5 4 3.3" stroke="#222" stroke-width="1.4" fill="none"/>
 <path d="M60 4.5l2.2 2.2-2.2 2" stroke="#c6c9cc" stroke-width="1.2" fill="none"/>
 <path d="M61.5 6.7h-4c-2.5 0-4 1.5-4 3.3" stroke="#c6c9cc" stroke-width="1.2" fill="none"/>
</svg>
<svg class="a" style="left:930px;top:1px" width="70" height="12" viewBox="0 0 70 12">
 <path d="M7 6.8h4.5" stroke="#777" stroke-width="0.9"/>
 <rect x="30" y="3.5" width="5" height="5" fill="none" stroke="#333" stroke-width="0.9"/>
 <path d="M31.5 3.5v-1.2h5v5h-1.5" fill="none" stroke="#333" stroke-width="0.8"/>
 <path d="M54 3.5l5 5M59 3.5l-5 5" stroke="#333" stroke-width="0.9"/>
</svg>
<!-- tabs -->
<div class="a" style="left:74px;top:17px;width:48px;height:15px;border:1px solid #a9b7c4;border-bottom:none;border-radius:2px 2px 0 0;background:linear-gradient(#e9f1f9,#fdfeff)"></div>
<div class="a" style="left:75px;top:31px;width:46px;height:1px;background:#fff"></div>
<div class="t tab" style="left:32px;top:20px;font-size:5.6px">Математика</div>
<div class="t tab" style="left:81px;top:20px;font-size:5.9px">Ввод/вывод</div>
<div class="t tab" style="left:131.5px;top:20px;font-size:5.9px">Функции</div>
<div class="t tab" style="left:172.8px;top:20px;font-size:5.9px">Матрицы/таблицы</div>
<div class="t tab" style="left:241px;top:20px;font-size:5.9px">Графики</div>
<div class="t tab" style="left:281px;top:20px;font-size:5.75px">Форматирование формул</div>
<div class="t tab" style="left:367.5px;top:20px;font-size:5.75px">Форматирование текста</div>
<div class="t tab" style="left:449px;top:20px;font-size:5.9px">Расчет</div>
<div class="t tab" style="left:484.6px;top:20px;font-size:5.9px">Документ</div>
<div class="t tab" style="left:528px;top:20px;font-size:5.7px">Ресурсы</div>
<!-- ribbon content -->
<div class="a" style="left:0;top:69.5px;width:1000px;height:8.5px;background:linear-gradient(#e4e8eb,#dbe0e4)"></div>
<div class="sep" style="left:76px;top:33px;height:35px"></div>
<div class="sep" style="left:170px;top:33px;height:44px"></div>
<div class="sep" style="left:288px;top:33px;height:44px"></div>
<div class="sep" style="left:419px;top:33px;height:44px"></div>
<div class="sep" style="left:496px;top:33px;height:35px"></div>
<div class="sep" style="left:571px;top:33px;height:44px"></div>
<div class="a" style="left:40px;top:34px;width:33px;height:34px;border:1px solid #b4c4d4;border-radius:2px;background:linear-gradient(#f1f6fb,#dfeaf5)"></div>
<div class="a" style="left:537px;top:34px;width:30px;height:34px;border:1px solid #b4c4d4;border-radius:2px;background:linear-gradient(#f1f6fb,#dfeaf5)"></div>
<div class="a" style="left:322px;top:34px;width:94px;height:10px;border:1px solid #aebfcf;border-radius:1px;background:linear-gradient(#eef4fa,#dce8f3)"></div>
<div class="lbl " style="left:-12.0px;top:54.0px;width:70px;font-size:5.8px;line-height:7px">Вставить</div>
<div class="lbl " style="left:-12.0px;top:62.0px;width:70px;font-size:5.8px;line-height:7px">документ</div>
<div class="lbl " style="left:21.5px;top:54.0px;width:70px;font-size:5.8px;line-height:7px">Кэшировать</div>
<div class="lbl " style="left:21.5px;top:62.0px;width:70px;font-size:5.8px;line-height:7px">документ</div>
<div class="lbl " style="left:70.0px;top:54.0px;width:70px;font-size:5.8px;line-height:7px">XMCD-, MCD-</div>
<div class="lbl " style="left:70.0px;top:62.0px;width:70px;font-size:5.8px;line-height:7px">преобразователь</div>
<div class="lbl dis" style="left:114.5px;top:54.0px;width:70px;font-size:5.8px;line-height:7px">Очистить</div>
<div class="lbl dis" style="left:114.5px;top:62.0px;width:70px;font-size:5.8px;line-height:7px">аннотации</div>
<div class="lbl " style="left:156.0px;top:54.0px;width:70px;font-size:5.8px;line-height:7px">Имя файла</div>
<div class="lbl " style="left:156.0px;top:62.0px;width:70px;font-size:5.8px;line-height:7px">данных</div>
<div class="lbl " style="left:191.5px;top:54.0px;width:70px;font-size:5.8px;line-height:7px">READEXCEL</div>
<div class="lbl " style="left:228.0px;top:54.0px;width:70px;font-size:5.8px;line-height:7px">Компонент</div>
<div class="lbl " style="left:228.0px;top:62.0px;width:70px;font-size:5.8px;line-height:7px">Excel</div>
<div class="lbl " style="left:270.5px;top:54.0px;width:70px;font-size:5.8px;line-height:7px">Вставить</div>
<div class="lbl " style="left:270.5px;top:62.0px;width:70px;font-size:5.8px;line-height:7px">объект</div>
<div class="lbl dis" style="left:405.0px;top:54.0px;width:70px;font-size:5.8px;line-height:7px">Назначить</div>
<div class="lbl dis" style="left:405.0px;top:62.0px;width:70px;font-size:5.8px;line-height:7px">ввод</div>
<div class="lbl dis" style="left:439.0px;top:54.0px;width:70px;font-size:5.8px;line-height:7px">Назначить</div>
<div class="lbl dis" style="left:439.0px;top:62.0px;width:70px;font-size:5.8px;line-height:7px">вывод</div>
<div class="lbl " style="left:481.0px;top:54.0px;width:70px;font-size:5.8px;line-height:7px">Показать в</div>
<div class="lbl " style="left:481.0px;top:62.0px;width:70px;font-size:5.8px;line-height:7px">виде списка</div>
<div class="lbl " style="left:517.0px;top:54.0px;width:70px;font-size:5.8px;line-height:7px">Показать в</div>
<div class="lbl " style="left:517.0px;top:62.0px;width:70px;font-size:5.8px;line-height:7px">документе</div>
<div class="lbl " style="left:37.5px;top:70.8px;width:100px;font-size:5.3px;line-height:7px">Документы PTC Mathcad</div>
<div class="lbl " style="left:179.5px;top:70.8px;width:100px;font-size:5.3px;line-height:7px">Импорт/экспорт данных</div>
<div class="lbl " style="left:304.5px;top:70.8px;width:100px;font-size:5.3px;line-height:7px">Объекты</div>
<div class="lbl " style="left:449.5px;top:70.8px;width:100px;font-size:5.3px;line-height:7px">Интеграция</div>
<div class="t" style="left:332.5px;top:36.8px;font-size:5.65px;line-height:7px;color:#333">Сохранять отношение сторон</div>
<div class="t dis" style="left:332.5px;top:48.9px;font-size:5.65px;line-height:7px;color:#c0c4c8">Сбросить размер объекта</div>
<div class="t dis" style="left:332.5px;top:60.4px;font-size:5.65px;line-height:7px;color:#c0c4c8">Обновить ссылку</div>
<div class="a" style="left:279.5px;top:59px;width:0;height:0;border-left:1.5px solid transparent;border-right:1.5px solid transparent;border-top:2px solid #444"></div>
<svg class="a" style="left:0;top:31px" width="600" height="38" viewBox="0 31 600 38">
 <!-- B1 insert doc -->
 <rect x="16" y="36" width="9" height="5.5" fill="#f4f6f8" stroke="#9aa3aa" stroke-width="0.6"/>
 <rect x="19" y="39.2" width="12.8" height="12.6" fill="#f0f6fb" stroke="#8f9aa3" stroke-width="0.7"/>
 <path d="M19 45.5h12.8M19 48.7h12.8M25.4 39.2v12.6" stroke="#a9c6dc" stroke-width="0.5"/>
 <path d="M24.5 36v5.5l-3-1.5 1 4c0.5 2 2 3 4 3h2v-4.5l-2.5-1.2v-5.3z" fill="#3b74a8"/>
 <rect x="27.5" y="48.5" width="3" height="1.5" fill="#555"/>
 <!-- B2 cache doc -->
 <rect x="49" y="36" width="7.8" height="10.5" fill="#fafbfc" stroke="#a0a8ae" stroke-width="0.6"/>
 <rect x="51.4" y="38" width="13.2" height="13.5" fill="#f2f7fb" stroke="#98a3ab" stroke-width="0.6" fill-opacity="0.7"/>
 <path d="M51.4 44.5h13.2M51.4 48h13.2M58 38v13.5" stroke="#b8cfe0" stroke-width="0.5"/>
 <rect x="50.5" y="38.5" width="3" height="1.4" fill="#666"/>
 <rect x="60" y="48" width="3.5" height="1.6" fill="#555"/>
 <!-- B3 converter -->
 <rect x="98.2" y="36" width="6.4" height="6.4" fill="#c9ced2" stroke="#a3a9ae" stroke-width="0.5"/>
 <rect x="102.2" y="39.2" width="11.6" height="12" fill="#f0f6fb" stroke="#7e8b96" stroke-width="0.7"/>
 <path d="M102.2 43.5h11.6M102.2 47.3h11.6M108 39.2v12" stroke="#a9c6dc" stroke-width="0.5"/>
 <path d="M99 40c0 4 2 6 6 6v-2.5l4.5 3.5-4.5 3.5v-2.2c-4.5 0-7-3-7-8.3z" fill="#4a7ab8"/>
 <!-- B4 clear annotations (disabled) -->
 <path d="M142 40h5M142 40l2-1.5M142 40l2 1.5M142 48h5M142 48l2-1.5M142 48l2 1.5M142 40v10" stroke="#ebc3c8" stroke-width="0.8" fill="none"/>
 <path d="M147 42c5-3 9-2 9 0 0 3-5 6-9 6" stroke="#d8dcdf" stroke-width="1" fill="none"/>
 <!-- B5 data file name -->
 <rect x="187.5" y="36" width="13" height="10" fill="#fbfbfb" stroke="#333" stroke-width="0.6"/>
 <text x="189" y="43" font-family="Liberation Sans" font-size="4" fill="#222">..\dir</text>
 <path d="M184 41.5h3.5v9h14l-1 -0.5z" fill="#d9c763"/>
 <path d="M184 51.5l3-6.5h15.5l-3 6.5z" fill="#f0df6a"/>
 <!-- B6 READEXCEL -->
 <rect x="222.5" y="36" width="13" height="11" fill="#cfe3f5" stroke="#4e6479" stroke-width="0.6"/>
 <path d="M222.5 39h13M222.5 42h13M222.5 45h13M226.5 36v11M230.5 36v11" stroke="#5c8fc4" stroke-width="0.5"/>
 <path d="M219 41.5h3.5v9h14z" fill="#d9c763"/>
 <path d="M219 51.5l3-6.5h15.5l-3 6.5z" fill="#f0df6a"/>
 <!-- B7 Excel component -->
 <rect x="262" y="35.5" width="11" height="12" fill="#d5e6f5" stroke="#3b4550" stroke-width="0.6"/>
 <path d="M262 38.5h11M262 41.5h11M262 44.5h11M265.5 35.5v12M269 35.5v12" stroke="#6a9ccf" stroke-width="0.5"/>
 <path d="M256 44l5 7M261 44l-5 7" stroke="#3f9a3c" stroke-width="1.8"/>
 <!-- B8 insert object -->
 <path d="M303.5 36.5h8.5l3.5 3.5v11.5h-12z" fill="#fafbfc" stroke="#8e959b" stroke-width="0.6"/>
 <path d="M307 46h8M307 49h8M311 40v11.5" stroke="#d8dde1" stroke-width="0.4"/>
 <rect x="299" y="41" width="10.5" height="8" fill="#e8f4fa" stroke="#7e8a94" stroke-width="0.6"/>
 <rect x="299" y="41" width="10.5" height="1.8" fill="#1e3a52"/>
 <!-- small icons -->
 <rect x="323.5" y="37" width="4" height="5.5" fill="#fff" stroke="#444" stroke-width="0.6"/>
 <rect x="327.5" y="35.5" width="3.5" height="7" fill="#d4e2ef" stroke="#888" stroke-width="0.5"/>
 <path d="M324 48v4h4M329 48v4" stroke="#ccd0d4" stroke-width="0.6" fill="none"/>
 <path d="M324 59.5h6v6h-6z" stroke="#d0d4d8" stroke-width="0.6" fill="none"/>
 <!-- B9/B10 disabled -->
 <rect x="433" y="39" width="13" height="10" fill="#f6f8fa" stroke="#d7dce2" stroke-width="0.7"/>
 <path d="M439 35.5v7M436.5 40l2.5 3 2.5-3" stroke="#a8c4e2" stroke-width="1.3" fill="none"/>
 <rect x="467" y="39" width="13" height="10" fill="#f6f8fa" stroke="#d7dce2" stroke-width="0.7"/>
 <path d="M477 41v7h-4M475 45.5l-2.5 2.5 2.5 2.5" stroke="#a8c4e2" stroke-width="1.3" fill="none"/>
 <!-- B11 list view -->
 <rect x="510.5" y="36" width="13" height="14" fill="#f2f4f6" stroke="#6f7479" stroke-width="0.8"/>
 <rect x="510.5" y="36" width="13" height="1.6" fill="#8a9096"/>
 <path d="M512.5 42h2M516 42h2M519.5 42h2M512.5 46h2M516 46h2M519.5 46h2" stroke="#3a5a7a" stroke-width="0.9"/>
 <!-- B12 show in doc -->
 <rect x="543" y="35.5" width="9" height="6" fill="#fff" stroke="#7e8c98" stroke-width="0.6"/>
 <rect x="545" y="39" width="10" height="10" fill="#e0ecf8" stroke="#4f75a8" stroke-width="0.7"/>
 <rect x="548.5" y="41" width="10" height="8" fill="#f4f2d0" stroke="#4f75a8" stroke-width="0.8"/>
 <path d="M551 43.5v2M553.5 43.5v2" stroke="#333" stroke-width="0.7"/>
</svg>
<!-- help icons -->
<svg class="a" style="left:966px;top:16px" width="34" height="14" viewBox="0 0 34 14">
 <path d="M2 5l7-3 7 3-7 3z" fill="#2b2b2b"/>
 <path d="M5 6.5v3c1.5 1.5 6.5 1.5 8 0v-3l-4 1.7z" fill="#2b2b2b"/>
 <path d="M15 5v4" stroke="#2b2b2b" stroke-width="0.8"/>
 <circle cx="25.8" cy="7" r="5" fill="#dfe8f0" stroke="#a3b3c0" stroke-width="1.1"/>
 <text x="25.8" y="9.5" font-family="Liberation Sans" font-size="7" font-weight="bold" fill="#2c3e52" text-anchor="middle">?</text>
</svg>

</body></html>
